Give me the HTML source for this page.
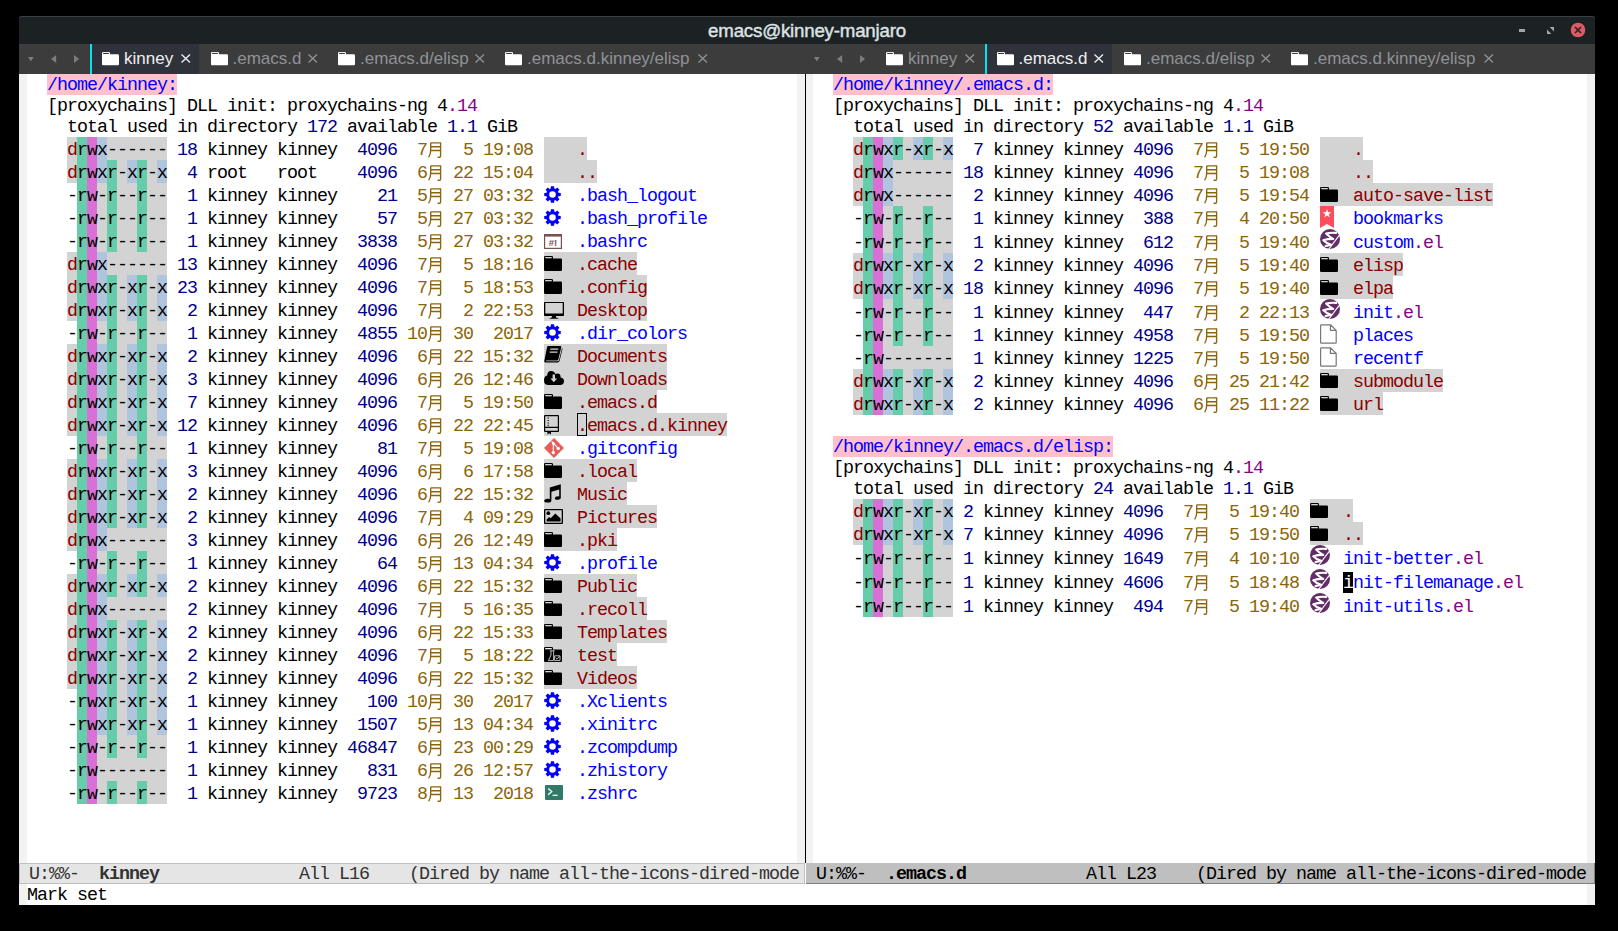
<!DOCTYPE html><html><head><meta charset="utf-8"><style>
html,body{margin:0;padding:0;}body{width:1618px;height:931px;background:#000;position:relative;overflow:hidden;}
.t{position:absolute;white-space:pre;line-height:23px;font-family:'Liberation Mono',monospace;font-size:18.333px;letter-spacing:-1px;}
.r{position:absolute;}
.i{position:absolute;overflow:visible;}
.s{position:absolute;white-space:pre;font-family:"Liberation Sans",sans-serif;}
</style></head><body>
<svg width="0" height="0" style="position:absolute"><defs>
<symbol id="folder" viewBox="0 0 18 15"><path d="M0,1.2Q0,0 1.2,0H7.8Q9,0 9,1.2V2.6H16.8Q18,2.6 18,3.8V13.8Q18,15 16.8,15H1.2Q0,15 0,13.8Z" fill="currentColor"/><rect x="1.2" y="1" width="6.6" height="1.3" fill="var(--ib,#d3d3d3)"/></symbol>
<symbol id="gear" viewBox="0 0 17 17"><path fill-rule="evenodd" fill="#0000ff" d="M6.69,2.57 L6.90,0.25 L10.10,0.25 L10.31,2.57 L11.41,3.03 L13.20,1.54 L15.46,3.80 L13.97,5.59 L14.43,6.69 L16.75,6.90 L16.75,10.10 L14.43,10.31 L13.97,11.41 L15.46,13.20 L13.20,15.46 L11.41,13.97 L10.31,14.43 L10.10,16.75 L6.90,16.75 L6.69,14.43 L5.59,13.97 L3.80,15.46 L1.54,13.20 L3.03,11.41 L2.57,10.31 L0.25,10.10 L0.25,6.90 L2.57,6.69 L3.03,5.59 L1.54,3.80 L3.80,1.54 L5.59,3.03Z M5.20,8.50 a3.3,3.3 0 1,0 6.6,0 a3.3,3.3 0 1,0 -6.6,0Z"/></symbol>
<symbol id="shebang" viewBox="0 0 18 15"><rect x="0.6" y="0.6" width="16.8" height="13.8" fill="#fff" stroke="#7b5050" stroke-width="1.2"/><rect x="0" y="0" width="18" height="2.6" fill="#7b5050"/><text x="9" y="12.3" font-family="Liberation Sans" font-weight="bold" font-size="9.5" fill="#7b5050" text-anchor="middle">#!</text></symbol>
<symbol id="monitor" viewBox="0 0 20 17"><path fill-rule="evenodd" d="M0.8,0H19.2Q20,0 20,0.8V13.2Q20,14 19.2,14H0.8Q0,14 0,13.2V0.8Q0,0 0.8,0ZM1.3,1.1V11.4H18.7V1.1Z"/><path d="M8.3,14H11.7L12.3,15.6L15,16.8H5L7.7,15.6Z"/></symbol>
<symbol id="book" viewBox="0 0 19 17"><path d="M4.2,0H16.5Q17.6,0 17.3,1.2L14.3,13.4Q14,14.4 13,14.4H2.2L1.8,15.3H13.4Q14.6,15.3 15,14.2L18,2.2L18.6,2.4L15.6,14.8Q15.2,16.4 13.6,16.4H1.3Q0,16.4 0.3,15.1L3.1,1.1Q3.3,0 4.2,0Z"/><path d="M6.3,3.2H14.2M5.7,6.2H13.5" stroke="#d3d3d3" stroke-width="1.3"/></symbol>
<symbol id="cloud" viewBox="0 0 20 14"><path d="M4.5,14H16Q20,14 20,10.3Q20,7 16.6,6.6Q16.8,2.8 13.5,2.6Q12.3,2.6 11.6,3.2Q10.2,0 7,0Q3.2,0.2 3.2,4.6Q0,5.4 0,9.4Q0.2,14 4.5,14Z"/><path d="M8.6,3.6H11V7.6H13.2L9.8,11.2L6.4,7.6H8.6Z" fill="#d3d3d3"/></symbol>
<symbol id="book2" viewBox="0 0 15 20"><path fill-rule="evenodd" d="M1,0H14Q15,0 15,1V16Q15,17 14,17H7V19.5L5.2,18.3L3.4,19.5V17H1Q0,17 0,16V1Q0,0 1,0ZM1.2,1.2V11.8H13.8V1.2ZM1.2,13V15.8H13.8V13Z"/><path d="M4.2,2.6V3.6M4.2,5V6M4.2,7.4V8.4M4.2,9.8V10.8" stroke="#000" stroke-width="1.3"/></symbol>
<symbol id="git" viewBox="0 0 20 20"><path d="M10,0.3L19.7,10L10,19.7L0.3,10Z" fill="#e35d5b" stroke="#e35d5b" stroke-width="0.6" stroke-linejoin="round"/><path d="M7.6,3.4L9.3,5.1V14.2M9.3,5.1L14,10.2" stroke="#fff" stroke-width="1.1" fill="none"/><circle cx="9.3" cy="14.6" r="1.7" fill="#fff"/><circle cx="14.2" cy="10.4" r="1.7" fill="#fff"/><circle cx="9.3" cy="5.3" r="1.4" fill="#fff"/></symbol>
<symbol id="music" viewBox="0 0 17 19"><path d="M5.8,3.6L16.8,0.2V13.6Q16.8,15.6 13.8,15.8Q10.8,15.8 10.8,14.2Q11,12.4 14,12.2Q14.6,12.2 15.2,12.4V5.4L7.4,7.8V16.2Q7.4,18.4 4.2,18.6Q0.2,18.6 0.2,17Q0.3,15 3.6,14.8Q4.3,14.8 5.8,15.1Z"/></symbol>
<symbol id="picture" viewBox="0 0 19 15"><path fill-rule="evenodd" d="M1,0H18Q19,0 19,1V14Q19,15 18,15H1Q0,15 0,14V1Q0,0 1,0ZM1.3,1.3V13.7H17.7V1.3Z"/><circle cx="4.3" cy="4.2" r="1.9"/><path d="M2.6,12.4V10.6L5.2,8L6.6,9.2L11.4,4.4L16.6,9.6V12.4Z"/></symbol>
<symbol id="testdir" viewBox="0 0 18 15"><path d="M0,1.2Q0,0 1.2,0H7.8Q9,0 9,1.2V2.6H16.8Q18,2.6 18,3.8V13.8Q18,15 16.8,15H1.2Q0,15 0,13.8Z"/><rect x="1.2" y="1" width="6.6" height="1.3" fill="#eee"/><path d="M5.8,3.8H10.6M7,3.8V8L4.4,13.6H9.6M9.6,3.8V13.6M10.6,8.8H16V13.6H10.6ZM11.6,10.8L13,12.2L15.8,9" stroke="#ccc" stroke-width="0.9" fill="none"/></symbol>
<symbol id="term" viewBox="0 0 18 15"><rect x="0" y="0" width="18" height="15" rx="1" fill="#317a6a"/><path d="M3.2,3.4L6.8,6.6L3.2,9.8" stroke="#fff" stroke-width="1.3" fill="none"/><path d="M7.6,10.3H12.6" stroke="#fff" stroke-width="1.2"/></symbol>
<symbol id="bookmark" viewBox="0 0 14 22"><path d="M0,0H14V22L7,18L0,22Z" fill="#ff4d5d"/><path d="M7,3L8.1,6.2H11.4L8.8,8.2L9.7,11.4L7,9.5L4.3,11.4L5.2,8.2L2.6,6.2H5.9Z" fill="#fff"/></symbol>
<symbol id="emacs" viewBox="0 0 20 20"><circle cx="10" cy="10" r="10" fill="#622d64"/><path d="M16.2,3.9Q10.5,3.4 6.1,4.5Q9,7.6 13.2,9.9Q7.4,9.9 3.3,11.3Q6.4,14.6 11.2,15.8Q8.2,16.5 5.6,17" stroke="#fff" stroke-width="2.1" fill="none" stroke-linejoin="round" stroke-linecap="round"/><path d="M19.8,5.6L8.6,20.4" stroke="#fff" stroke-width="1.1"/></symbol>
<symbol id="file" viewBox="0 0 17 20"><path d="M1.2,0.8H10.4L16.2,6.4V18.4Q16.2,19.2 15.4,19.2H1.2Q0.6,19.2 0.6,18.4V1.6Q0.6,0.8 1.2,0.8ZM10.4,0.8V6.4H16.2" stroke="#777" stroke-width="1.2" fill="none" stroke-linejoin="round"/></symbol>
<symbol id="yue" viewBox="0 0 14 16"><path d="M2.7,0.8V8Q2.7,12.8 0.6,15.4M2.7,0.8H12.6V14Q12.6,15.2 11.4,15.2H9.6M2.7,4.7H12.6M2.7,8.5H12.6" stroke="#8b6508" stroke-width="1.35" fill="none"/></symbol>
<symbol id="tfolder" viewBox="0 0 17 13.5"><path d="M0,1.2Q0,0 1.2,0H6.8Q8,0 8,1.2V2.2H15.8Q17,2.2 17,3.4V12.3Q17,13.5 15.8,13.5H1.2Q0,13.5 0,12.3Z" fill="#fff"/><rect x="1.1" y="0.9" width="5.8" height="1.1" fill="var(--tb,#3c3c3c)"/></symbol>
</defs></svg>
<div class="r" style="left:19px;top:44px;width:1576px;height:861px;background:#fff;"></div>
<div class="r" style="left:19px;top:16px;width:1576px;height:28px;background:#1c2123;border-radius:3px 3px 0 0;box-shadow:inset 0 1px 0 #384144"></div>
<div class="s" style="left:19px;top:20px;width:1576px;text-align:center;font-size:18.7px;letter-spacing:-0.2px;-webkit-text-stroke:0.45px #dce1e4;color:#dce1e4;line-height:21px">emacs@kinney-manjaro</div>
<div class="r" style="left:1519px;top:28.5px;width:6.3px;height:3px;background:#a3a6aa;"></div>
<svg class="i" style="left:1546.5px;top:26.5px" width="7" height="7"><path d="M2.6,0H7V4.4ZM0,2.6V7H4.4Z" fill="#a3a6aa"/></svg>
<svg class="i" style="left:1570px;top:22px" width="16" height="16"><circle cx="8" cy="8" r="7.3" fill="#dc5c66"/><path d="M5,5L11,11M11,5L5,11" stroke="#1e2325" stroke-width="1.7"/></svg>
<div class="r" style="left:19px;top:44px;width:1576px;height:30px;background:#3c3c3c;"></div>
<svg class="i" style="left:28px;top:56.5px" width="7" height="6"><path d="M0,0H5.6L2.8,4.6Z" fill="#7c7c7c"/></svg>
<svg class="i" style="left:51px;top:55px" width="7" height="9"><path d="M5.2,0V8L0,4Z" fill="#7c7c7c"/></svg>
<svg class="i" style="left:74px;top:55px" width="7" height="9"><path d="M0,0V8L5.2,4Z" fill="#7c7c7c"/></svg>
<div class="r" style="left:92px;top:44px;width:107px;height:30px;background:#2f323b;"></div>
<div class="r" style="left:90px;top:44px;width:2px;height:30px;background:#00e5f0;"></div>
<svg class="i" style="left:101.5px;top:52px;--tb:#2f323b" width="17" height="13.5"><use href="#tfolder"/></svg>
<div class="s" style="left:124px;top:49px;font-size:17px;line-height:20px;color:#f0f0f0">kinney</div>
<svg class="i" style="left:180.6px;top:54px" width="10" height="9"><path d="M0.5,0.5L9,8.5M9,0.5L0.5,8.5" stroke="#f0f0f0" stroke-width="1.3"/></svg>
<svg class="i" style="left:210.7px;top:52px;--tb:#3c3c3c" width="17" height="13.5"><use href="#tfolder"/></svg>
<div class="s" style="left:232.5px;top:49px;font-size:17px;line-height:20px;color:#8f9296">.emacs.d</div>
<svg class="i" style="left:307.7px;top:54px" width="10" height="9"><path d="M0.5,0.5L9,8.5M9,0.5L0.5,8.5" stroke="#8f9296" stroke-width="1.3"/></svg>
<svg class="i" style="left:337.7px;top:52px;--tb:#3c3c3c" width="17" height="13.5"><use href="#tfolder"/></svg>
<div class="s" style="left:360px;top:49px;font-size:17px;line-height:20px;color:#8f9296">.emacs.d/elisp</div>
<svg class="i" style="left:475px;top:54px" width="10" height="9"><path d="M0.5,0.5L9,8.5M9,0.5L0.5,8.5" stroke="#8f9296" stroke-width="1.3"/></svg>
<svg class="i" style="left:504.7px;top:52px;--tb:#3c3c3c" width="17" height="13.5"><use href="#tfolder"/></svg>
<div class="s" style="left:527px;top:49px;font-size:17px;line-height:20px;color:#8f9296">.emacs.d.kinney/elisp</div>
<svg class="i" style="left:698px;top:54px" width="10" height="9"><path d="M0.5,0.5L9,8.5M9,0.5L0.5,8.5" stroke="#8f9296" stroke-width="1.3"/></svg>
<svg class="i" style="left:814px;top:56.5px" width="7" height="6"><path d="M0,0H5.6L2.8,4.6Z" fill="#7c7c7c"/></svg>
<svg class="i" style="left:837px;top:55px" width="7" height="9"><path d="M5.2,0V8L0,4Z" fill="#7c7c7c"/></svg>
<svg class="i" style="left:860px;top:55px" width="7" height="9"><path d="M0,0V8L5.2,4Z" fill="#7c7c7c"/></svg>
<svg class="i" style="left:885.7px;top:52px;--tb:#3c3c3c" width="17" height="13.5"><use href="#tfolder"/></svg>
<div class="s" style="left:908px;top:49px;font-size:17px;line-height:20px;color:#8f9296">kinney</div>
<svg class="i" style="left:964.8px;top:54px" width="10" height="9"><path d="M0.5,0.5L9,8.5M9,0.5L0.5,8.5" stroke="#8f9296" stroke-width="1.3"/></svg>
<div class="r" style="left:987px;top:44px;width:125px;height:30px;background:#2f323b;"></div>
<div class="r" style="left:985px;top:44px;width:2px;height:30px;background:#00e5f0;"></div>
<svg class="i" style="left:996.8px;top:52px;--tb:#2f323b" width="17" height="13.5"><use href="#tfolder"/></svg>
<div class="s" style="left:1018.5px;top:49px;font-size:17px;line-height:20px;color:#f0f0f0">.emacs.d</div>
<svg class="i" style="left:1093.7px;top:54px" width="10" height="9"><path d="M0.5,0.5L9,8.5M9,0.5L0.5,8.5" stroke="#f0f0f0" stroke-width="1.3"/></svg>
<svg class="i" style="left:1123.7px;top:52px;--tb:#3c3c3c" width="17" height="13.5"><use href="#tfolder"/></svg>
<div class="s" style="left:1146px;top:49px;font-size:17px;line-height:20px;color:#8f9296">.emacs.d/elisp</div>
<svg class="i" style="left:1261.4px;top:54px" width="10" height="9"><path d="M0.5,0.5L9,8.5M9,0.5L0.5,8.5" stroke="#8f9296" stroke-width="1.3"/></svg>
<svg class="i" style="left:1290.8px;top:52px;--tb:#3c3c3c" width="17" height="13.5"><use href="#tfolder"/></svg>
<div class="s" style="left:1313px;top:49px;font-size:17px;line-height:20px;color:#8f9296">.emacs.d.kinney/elisp</div>
<svg class="i" style="left:1484.3px;top:54px" width="10" height="9"><path d="M0.5,0.5L9,8.5M9,0.5L0.5,8.5" stroke="#8f9296" stroke-width="1.3"/></svg>
<div class="r" style="left:19px;top:74px;width:8px;height:831px;background:#f2f2f2;"></div>
<div class="r" style="left:797px;top:74px;width:8px;height:789px;background:#f2f2f2;"></div>
<div class="r" style="left:805px;top:74px;width:1px;height:789px;background:#000;"></div>
<div class="r" style="left:806px;top:74px;width:7px;height:789px;background:#f2f2f2;"></div>
<div class="r" style="left:1587px;top:74px;width:8px;height:831px;background:#f2f2f2;"></div>
<div class="r" style="left:47px;top:74px;width:130px;height:21px;background:#ffc0cb;"></div>
<div class="t" style="left:47px;top:74px;color:#0000ff;">/home/kinney:</div>
<div class="t" style="left:47px;top:95px;color:#000;">[proxychains] DLL init: proxychains-ng 4</div>
<div class="t" style="left:447px;top:95px;color:#8b008b;">.14</div>
<div class="t" style="left:47px;top:116px;color:#000;">  total used in directory </div>
<div class="t" style="left:307px;top:116px;color:#00008b;">172</div>
<div class="t" style="left:337px;top:116px;color:#000;"> available </div>
<div class="t" style="left:447px;top:116px;color:#00008b;">1.1</div>
<div class="t" style="left:477px;top:116px;color:#000;"> GiB</div>
<div class="r" style="left:67px;top:137px;width:10px;height:23px;background:#d3d3d3;"></div>
<div class="r" style="left:77px;top:137px;width:10px;height:23px;background:#66cdaa;"></div>
<div class="r" style="left:87px;top:137px;width:10px;height:23px;background:#da70d6;"></div>
<div class="r" style="left:97px;top:137px;width:10px;height:23px;background:#b0c4de;"></div>
<div class="r" style="left:107px;top:137px;width:10px;height:23px;background:#d3d3d3;"></div>
<div class="r" style="left:117px;top:137px;width:10px;height:23px;background:#d3d3d3;"></div>
<div class="r" style="left:127px;top:137px;width:10px;height:23px;background:#d3d3d3;"></div>
<div class="r" style="left:137px;top:137px;width:10px;height:23px;background:#d3d3d3;"></div>
<div class="r" style="left:147px;top:137px;width:10px;height:23px;background:#d3d3d3;"></div>
<div class="r" style="left:157px;top:137px;width:10px;height:23px;background:#d3d3d3;"></div>
<div class="t" style="left:67px;top:139px;color:#8b0000;">d</div>
<div class="t" style="left:77px;top:139px;color:#000;">rwx------</div>
<div class="t" style="left:177px;top:139px;color:#00008b;">18</div>
<div class="t" style="left:207px;top:139px;color:#000;">kinney kinney</div>
<div class="t" style="left:357px;top:139px;color:#00008b;">4096</div>
<div class="t" style="left:417px;top:139px;color:#8b6508;">7</div>
<svg class="i" style="left:428px;top:142px" width="14" height="16"><use href="#yue"/></svg>
<div class="t" style="left:463px;top:139px;color:#8b6508;">5</div>
<div class="t" style="left:483px;top:139px;color:#8b6508;">19:08</div>
<div class="r" style="left:544px;top:137px;width:43px;height:23px;background:#d3d3d3;"></div>
<div class="t" style="left:577px;top:139px;color:#8b0000;">.</div>
<div class="r" style="left:67px;top:160px;width:10px;height:23px;background:#d3d3d3;"></div>
<div class="r" style="left:77px;top:160px;width:10px;height:23px;background:#66cdaa;"></div>
<div class="r" style="left:87px;top:160px;width:10px;height:23px;background:#da70d6;"></div>
<div class="r" style="left:97px;top:160px;width:10px;height:23px;background:#b0c4de;"></div>
<div class="r" style="left:107px;top:160px;width:10px;height:23px;background:#66cdaa;"></div>
<div class="r" style="left:117px;top:160px;width:10px;height:23px;background:#d3d3d3;"></div>
<div class="r" style="left:127px;top:160px;width:10px;height:23px;background:#b0c4de;"></div>
<div class="r" style="left:137px;top:160px;width:10px;height:23px;background:#66cdaa;"></div>
<div class="r" style="left:147px;top:160px;width:10px;height:23px;background:#d3d3d3;"></div>
<div class="r" style="left:157px;top:160px;width:10px;height:23px;background:#b0c4de;"></div>
<div class="t" style="left:67px;top:162px;color:#8b0000;">d</div>
<div class="t" style="left:77px;top:162px;color:#000;">rwxr-xr-x</div>
<div class="t" style="left:187px;top:162px;color:#00008b;">4</div>
<div class="t" style="left:207px;top:162px;color:#000;">root   root</div>
<div class="t" style="left:357px;top:162px;color:#00008b;">4096</div>
<div class="t" style="left:417px;top:162px;color:#8b6508;">6</div>
<svg class="i" style="left:428px;top:165px" width="14" height="16"><use href="#yue"/></svg>
<div class="t" style="left:453px;top:162px;color:#8b6508;">22</div>
<div class="t" style="left:483px;top:162px;color:#8b6508;">15:04</div>
<div class="r" style="left:544px;top:160px;width:53px;height:23px;background:#d3d3d3;"></div>
<div class="t" style="left:577px;top:162px;color:#8b0000;">..</div>
<div class="r" style="left:77px;top:183px;width:10px;height:23px;background:#66cdaa;"></div>
<div class="r" style="left:87px;top:183px;width:10px;height:23px;background:#da70d6;"></div>
<div class="r" style="left:97px;top:183px;width:10px;height:23px;background:#d3d3d3;"></div>
<div class="r" style="left:107px;top:183px;width:10px;height:23px;background:#66cdaa;"></div>
<div class="r" style="left:117px;top:183px;width:10px;height:23px;background:#d3d3d3;"></div>
<div class="r" style="left:127px;top:183px;width:10px;height:23px;background:#d3d3d3;"></div>
<div class="r" style="left:137px;top:183px;width:10px;height:23px;background:#66cdaa;"></div>
<div class="r" style="left:147px;top:183px;width:10px;height:23px;background:#d3d3d3;"></div>
<div class="r" style="left:157px;top:183px;width:10px;height:23px;background:#d3d3d3;"></div>
<div class="t" style="left:67px;top:185px;color:#000;">-</div>
<div class="t" style="left:77px;top:185px;color:#000;">rw-r--r--</div>
<div class="t" style="left:187px;top:185px;color:#00008b;">1</div>
<div class="t" style="left:207px;top:185px;color:#000;">kinney kinney</div>
<div class="t" style="left:377px;top:185px;color:#00008b;">21</div>
<div class="t" style="left:417px;top:185px;color:#8b6508;">5</div>
<svg class="i" style="left:428px;top:188px" width="14" height="16"><use href="#yue"/></svg>
<div class="t" style="left:453px;top:185px;color:#8b6508;">27</div>
<div class="t" style="left:483px;top:185px;color:#8b6508;">03:32</div>
<svg class="i" style="left:544px;top:186px" width="17" height="17"><use href="#gear"/></svg>
<div class="t" style="left:577px;top:185px;color:#0000ff;">.bash_logout</div>
<div class="r" style="left:77px;top:206px;width:10px;height:23px;background:#66cdaa;"></div>
<div class="r" style="left:87px;top:206px;width:10px;height:23px;background:#da70d6;"></div>
<div class="r" style="left:97px;top:206px;width:10px;height:23px;background:#d3d3d3;"></div>
<div class="r" style="left:107px;top:206px;width:10px;height:23px;background:#66cdaa;"></div>
<div class="r" style="left:117px;top:206px;width:10px;height:23px;background:#d3d3d3;"></div>
<div class="r" style="left:127px;top:206px;width:10px;height:23px;background:#d3d3d3;"></div>
<div class="r" style="left:137px;top:206px;width:10px;height:23px;background:#66cdaa;"></div>
<div class="r" style="left:147px;top:206px;width:10px;height:23px;background:#d3d3d3;"></div>
<div class="r" style="left:157px;top:206px;width:10px;height:23px;background:#d3d3d3;"></div>
<div class="t" style="left:67px;top:208px;color:#000;">-</div>
<div class="t" style="left:77px;top:208px;color:#000;">rw-r--r--</div>
<div class="t" style="left:187px;top:208px;color:#00008b;">1</div>
<div class="t" style="left:207px;top:208px;color:#000;">kinney kinney</div>
<div class="t" style="left:377px;top:208px;color:#00008b;">57</div>
<div class="t" style="left:417px;top:208px;color:#8b6508;">5</div>
<svg class="i" style="left:428px;top:211px" width="14" height="16"><use href="#yue"/></svg>
<div class="t" style="left:453px;top:208px;color:#8b6508;">27</div>
<div class="t" style="left:483px;top:208px;color:#8b6508;">03:32</div>
<svg class="i" style="left:544px;top:209px" width="17" height="17"><use href="#gear"/></svg>
<div class="t" style="left:577px;top:208px;color:#0000ff;">.bash_profile</div>
<div class="r" style="left:77px;top:229px;width:10px;height:23px;background:#66cdaa;"></div>
<div class="r" style="left:87px;top:229px;width:10px;height:23px;background:#da70d6;"></div>
<div class="r" style="left:97px;top:229px;width:10px;height:23px;background:#d3d3d3;"></div>
<div class="r" style="left:107px;top:229px;width:10px;height:23px;background:#66cdaa;"></div>
<div class="r" style="left:117px;top:229px;width:10px;height:23px;background:#d3d3d3;"></div>
<div class="r" style="left:127px;top:229px;width:10px;height:23px;background:#d3d3d3;"></div>
<div class="r" style="left:137px;top:229px;width:10px;height:23px;background:#66cdaa;"></div>
<div class="r" style="left:147px;top:229px;width:10px;height:23px;background:#d3d3d3;"></div>
<div class="r" style="left:157px;top:229px;width:10px;height:23px;background:#d3d3d3;"></div>
<div class="t" style="left:67px;top:231px;color:#000;">-</div>
<div class="t" style="left:77px;top:231px;color:#000;">rw-r--r--</div>
<div class="t" style="left:187px;top:231px;color:#00008b;">1</div>
<div class="t" style="left:207px;top:231px;color:#000;">kinney kinney</div>
<div class="t" style="left:357px;top:231px;color:#00008b;">3838</div>
<div class="t" style="left:417px;top:231px;color:#8b6508;">5</div>
<svg class="i" style="left:428px;top:234px" width="14" height="16"><use href="#yue"/></svg>
<div class="t" style="left:453px;top:231px;color:#8b6508;">27</div>
<div class="t" style="left:483px;top:231px;color:#8b6508;">03:32</div>
<svg class="i" style="left:544px;top:234px" width="18" height="15"><use href="#shebang"/></svg>
<div class="t" style="left:577px;top:231px;color:#0000ff;">.bashrc</div>
<div class="r" style="left:67px;top:252px;width:10px;height:23px;background:#d3d3d3;"></div>
<div class="r" style="left:77px;top:252px;width:10px;height:23px;background:#66cdaa;"></div>
<div class="r" style="left:87px;top:252px;width:10px;height:23px;background:#da70d6;"></div>
<div class="r" style="left:97px;top:252px;width:10px;height:23px;background:#b0c4de;"></div>
<div class="r" style="left:107px;top:252px;width:10px;height:23px;background:#d3d3d3;"></div>
<div class="r" style="left:117px;top:252px;width:10px;height:23px;background:#d3d3d3;"></div>
<div class="r" style="left:127px;top:252px;width:10px;height:23px;background:#d3d3d3;"></div>
<div class="r" style="left:137px;top:252px;width:10px;height:23px;background:#d3d3d3;"></div>
<div class="r" style="left:147px;top:252px;width:10px;height:23px;background:#d3d3d3;"></div>
<div class="r" style="left:157px;top:252px;width:10px;height:23px;background:#d3d3d3;"></div>
<div class="t" style="left:67px;top:254px;color:#8b0000;">d</div>
<div class="t" style="left:77px;top:254px;color:#000;">rwx------</div>
<div class="t" style="left:177px;top:254px;color:#00008b;">13</div>
<div class="t" style="left:207px;top:254px;color:#000;">kinney kinney</div>
<div class="t" style="left:357px;top:254px;color:#00008b;">4096</div>
<div class="t" style="left:417px;top:254px;color:#8b6508;">7</div>
<svg class="i" style="left:428px;top:257px" width="14" height="16"><use href="#yue"/></svg>
<div class="t" style="left:463px;top:254px;color:#8b6508;">5</div>
<div class="t" style="left:483px;top:254px;color:#8b6508;">18:16</div>
<div class="r" style="left:544px;top:252px;width:93px;height:23px;background:#d3d3d3;"></div>
<svg class="i" style="left:544px;top:256px" width="18" height="15"><use href="#folder"/></svg>
<div class="t" style="left:577px;top:254px;color:#8b0000;">.cache</div>
<div class="r" style="left:67px;top:275px;width:10px;height:23px;background:#d3d3d3;"></div>
<div class="r" style="left:77px;top:275px;width:10px;height:23px;background:#66cdaa;"></div>
<div class="r" style="left:87px;top:275px;width:10px;height:23px;background:#da70d6;"></div>
<div class="r" style="left:97px;top:275px;width:10px;height:23px;background:#b0c4de;"></div>
<div class="r" style="left:107px;top:275px;width:10px;height:23px;background:#66cdaa;"></div>
<div class="r" style="left:117px;top:275px;width:10px;height:23px;background:#d3d3d3;"></div>
<div class="r" style="left:127px;top:275px;width:10px;height:23px;background:#b0c4de;"></div>
<div class="r" style="left:137px;top:275px;width:10px;height:23px;background:#66cdaa;"></div>
<div class="r" style="left:147px;top:275px;width:10px;height:23px;background:#d3d3d3;"></div>
<div class="r" style="left:157px;top:275px;width:10px;height:23px;background:#b0c4de;"></div>
<div class="t" style="left:67px;top:277px;color:#8b0000;">d</div>
<div class="t" style="left:77px;top:277px;color:#000;">rwxr-xr-x</div>
<div class="t" style="left:177px;top:277px;color:#00008b;">23</div>
<div class="t" style="left:207px;top:277px;color:#000;">kinney kinney</div>
<div class="t" style="left:357px;top:277px;color:#00008b;">4096</div>
<div class="t" style="left:417px;top:277px;color:#8b6508;">7</div>
<svg class="i" style="left:428px;top:280px" width="14" height="16"><use href="#yue"/></svg>
<div class="t" style="left:463px;top:277px;color:#8b6508;">5</div>
<div class="t" style="left:483px;top:277px;color:#8b6508;">18:53</div>
<div class="r" style="left:544px;top:275px;width:103px;height:23px;background:#d3d3d3;"></div>
<svg class="i" style="left:544px;top:279px" width="18" height="15"><use href="#folder"/></svg>
<div class="t" style="left:577px;top:277px;color:#8b0000;">.config</div>
<div class="r" style="left:67px;top:298px;width:10px;height:23px;background:#d3d3d3;"></div>
<div class="r" style="left:77px;top:298px;width:10px;height:23px;background:#66cdaa;"></div>
<div class="r" style="left:87px;top:298px;width:10px;height:23px;background:#da70d6;"></div>
<div class="r" style="left:97px;top:298px;width:10px;height:23px;background:#b0c4de;"></div>
<div class="r" style="left:107px;top:298px;width:10px;height:23px;background:#66cdaa;"></div>
<div class="r" style="left:117px;top:298px;width:10px;height:23px;background:#d3d3d3;"></div>
<div class="r" style="left:127px;top:298px;width:10px;height:23px;background:#b0c4de;"></div>
<div class="r" style="left:137px;top:298px;width:10px;height:23px;background:#66cdaa;"></div>
<div class="r" style="left:147px;top:298px;width:10px;height:23px;background:#d3d3d3;"></div>
<div class="r" style="left:157px;top:298px;width:10px;height:23px;background:#b0c4de;"></div>
<div class="t" style="left:67px;top:300px;color:#8b0000;">d</div>
<div class="t" style="left:77px;top:300px;color:#000;">rwxr-xr-x</div>
<div class="t" style="left:187px;top:300px;color:#00008b;">2</div>
<div class="t" style="left:207px;top:300px;color:#000;">kinney kinney</div>
<div class="t" style="left:357px;top:300px;color:#00008b;">4096</div>
<div class="t" style="left:417px;top:300px;color:#8b6508;">7</div>
<svg class="i" style="left:428px;top:303px" width="14" height="16"><use href="#yue"/></svg>
<div class="t" style="left:463px;top:300px;color:#8b6508;">2</div>
<div class="t" style="left:483px;top:300px;color:#8b6508;">22:53</div>
<div class="r" style="left:544px;top:298px;width:103px;height:23px;background:#d3d3d3;"></div>
<svg class="i" style="left:544px;top:302px" width="20" height="17"><use href="#monitor"/></svg>
<div class="t" style="left:577px;top:300px;color:#8b0000;">Desktop</div>
<div class="r" style="left:77px;top:321px;width:10px;height:23px;background:#66cdaa;"></div>
<div class="r" style="left:87px;top:321px;width:10px;height:23px;background:#da70d6;"></div>
<div class="r" style="left:97px;top:321px;width:10px;height:23px;background:#d3d3d3;"></div>
<div class="r" style="left:107px;top:321px;width:10px;height:23px;background:#66cdaa;"></div>
<div class="r" style="left:117px;top:321px;width:10px;height:23px;background:#d3d3d3;"></div>
<div class="r" style="left:127px;top:321px;width:10px;height:23px;background:#d3d3d3;"></div>
<div class="r" style="left:137px;top:321px;width:10px;height:23px;background:#66cdaa;"></div>
<div class="r" style="left:147px;top:321px;width:10px;height:23px;background:#d3d3d3;"></div>
<div class="r" style="left:157px;top:321px;width:10px;height:23px;background:#d3d3d3;"></div>
<div class="t" style="left:67px;top:323px;color:#000;">-</div>
<div class="t" style="left:77px;top:323px;color:#000;">rw-r--r--</div>
<div class="t" style="left:187px;top:323px;color:#00008b;">1</div>
<div class="t" style="left:207px;top:323px;color:#000;">kinney kinney</div>
<div class="t" style="left:357px;top:323px;color:#00008b;">4855</div>
<div class="t" style="left:407px;top:323px;color:#8b6508;">10</div>
<svg class="i" style="left:428px;top:326px" width="14" height="16"><use href="#yue"/></svg>
<div class="t" style="left:453px;top:323px;color:#8b6508;">30</div>
<div class="t" style="left:493px;top:323px;color:#8b6508;">2017</div>
<svg class="i" style="left:544px;top:324px" width="17" height="17"><use href="#gear"/></svg>
<div class="t" style="left:577px;top:323px;color:#0000ff;">.dir_colors</div>
<div class="r" style="left:67px;top:344px;width:10px;height:23px;background:#d3d3d3;"></div>
<div class="r" style="left:77px;top:344px;width:10px;height:23px;background:#66cdaa;"></div>
<div class="r" style="left:87px;top:344px;width:10px;height:23px;background:#da70d6;"></div>
<div class="r" style="left:97px;top:344px;width:10px;height:23px;background:#b0c4de;"></div>
<div class="r" style="left:107px;top:344px;width:10px;height:23px;background:#66cdaa;"></div>
<div class="r" style="left:117px;top:344px;width:10px;height:23px;background:#d3d3d3;"></div>
<div class="r" style="left:127px;top:344px;width:10px;height:23px;background:#b0c4de;"></div>
<div class="r" style="left:137px;top:344px;width:10px;height:23px;background:#66cdaa;"></div>
<div class="r" style="left:147px;top:344px;width:10px;height:23px;background:#d3d3d3;"></div>
<div class="r" style="left:157px;top:344px;width:10px;height:23px;background:#b0c4de;"></div>
<div class="t" style="left:67px;top:346px;color:#8b0000;">d</div>
<div class="t" style="left:77px;top:346px;color:#000;">rwxr-xr-x</div>
<div class="t" style="left:187px;top:346px;color:#00008b;">2</div>
<div class="t" style="left:207px;top:346px;color:#000;">kinney kinney</div>
<div class="t" style="left:357px;top:346px;color:#00008b;">4096</div>
<div class="t" style="left:417px;top:346px;color:#8b6508;">6</div>
<svg class="i" style="left:428px;top:349px" width="14" height="16"><use href="#yue"/></svg>
<div class="t" style="left:453px;top:346px;color:#8b6508;">22</div>
<div class="t" style="left:483px;top:346px;color:#8b6508;">15:32</div>
<div class="r" style="left:544px;top:344px;width:123px;height:23px;background:#d3d3d3;"></div>
<svg class="i" style="left:544px;top:346px" width="19" height="17"><use href="#book"/></svg>
<div class="t" style="left:577px;top:346px;color:#8b0000;">Documents</div>
<div class="r" style="left:67px;top:367px;width:10px;height:23px;background:#d3d3d3;"></div>
<div class="r" style="left:77px;top:367px;width:10px;height:23px;background:#66cdaa;"></div>
<div class="r" style="left:87px;top:367px;width:10px;height:23px;background:#da70d6;"></div>
<div class="r" style="left:97px;top:367px;width:10px;height:23px;background:#b0c4de;"></div>
<div class="r" style="left:107px;top:367px;width:10px;height:23px;background:#66cdaa;"></div>
<div class="r" style="left:117px;top:367px;width:10px;height:23px;background:#d3d3d3;"></div>
<div class="r" style="left:127px;top:367px;width:10px;height:23px;background:#b0c4de;"></div>
<div class="r" style="left:137px;top:367px;width:10px;height:23px;background:#66cdaa;"></div>
<div class="r" style="left:147px;top:367px;width:10px;height:23px;background:#d3d3d3;"></div>
<div class="r" style="left:157px;top:367px;width:10px;height:23px;background:#b0c4de;"></div>
<div class="t" style="left:67px;top:369px;color:#8b0000;">d</div>
<div class="t" style="left:77px;top:369px;color:#000;">rwxr-xr-x</div>
<div class="t" style="left:187px;top:369px;color:#00008b;">3</div>
<div class="t" style="left:207px;top:369px;color:#000;">kinney kinney</div>
<div class="t" style="left:357px;top:369px;color:#00008b;">4096</div>
<div class="t" style="left:417px;top:369px;color:#8b6508;">6</div>
<svg class="i" style="left:428px;top:372px" width="14" height="16"><use href="#yue"/></svg>
<div class="t" style="left:453px;top:369px;color:#8b6508;">26</div>
<div class="t" style="left:483px;top:369px;color:#8b6508;">12:46</div>
<div class="r" style="left:544px;top:367px;width:123px;height:23px;background:#d3d3d3;"></div>
<svg class="i" style="left:544px;top:371px" width="20" height="14"><use href="#cloud"/></svg>
<div class="t" style="left:577px;top:369px;color:#8b0000;">Downloads</div>
<div class="r" style="left:67px;top:390px;width:10px;height:23px;background:#d3d3d3;"></div>
<div class="r" style="left:77px;top:390px;width:10px;height:23px;background:#66cdaa;"></div>
<div class="r" style="left:87px;top:390px;width:10px;height:23px;background:#da70d6;"></div>
<div class="r" style="left:97px;top:390px;width:10px;height:23px;background:#b0c4de;"></div>
<div class="r" style="left:107px;top:390px;width:10px;height:23px;background:#66cdaa;"></div>
<div class="r" style="left:117px;top:390px;width:10px;height:23px;background:#d3d3d3;"></div>
<div class="r" style="left:127px;top:390px;width:10px;height:23px;background:#b0c4de;"></div>
<div class="r" style="left:137px;top:390px;width:10px;height:23px;background:#66cdaa;"></div>
<div class="r" style="left:147px;top:390px;width:10px;height:23px;background:#d3d3d3;"></div>
<div class="r" style="left:157px;top:390px;width:10px;height:23px;background:#b0c4de;"></div>
<div class="t" style="left:67px;top:392px;color:#8b0000;">d</div>
<div class="t" style="left:77px;top:392px;color:#000;">rwxr-xr-x</div>
<div class="t" style="left:187px;top:392px;color:#00008b;">7</div>
<div class="t" style="left:207px;top:392px;color:#000;">kinney kinney</div>
<div class="t" style="left:357px;top:392px;color:#00008b;">4096</div>
<div class="t" style="left:417px;top:392px;color:#8b6508;">7</div>
<svg class="i" style="left:428px;top:395px" width="14" height="16"><use href="#yue"/></svg>
<div class="t" style="left:463px;top:392px;color:#8b6508;">5</div>
<div class="t" style="left:483px;top:392px;color:#8b6508;">19:50</div>
<div class="r" style="left:544px;top:390px;width:113px;height:23px;background:#d3d3d3;"></div>
<svg class="i" style="left:544px;top:394px" width="18" height="15"><use href="#folder"/></svg>
<div class="t" style="left:577px;top:392px;color:#8b0000;">.emacs.d</div>
<div class="r" style="left:67px;top:413px;width:10px;height:23px;background:#d3d3d3;"></div>
<div class="r" style="left:77px;top:413px;width:10px;height:23px;background:#66cdaa;"></div>
<div class="r" style="left:87px;top:413px;width:10px;height:23px;background:#da70d6;"></div>
<div class="r" style="left:97px;top:413px;width:10px;height:23px;background:#b0c4de;"></div>
<div class="r" style="left:107px;top:413px;width:10px;height:23px;background:#66cdaa;"></div>
<div class="r" style="left:117px;top:413px;width:10px;height:23px;background:#d3d3d3;"></div>
<div class="r" style="left:127px;top:413px;width:10px;height:23px;background:#b0c4de;"></div>
<div class="r" style="left:137px;top:413px;width:10px;height:23px;background:#66cdaa;"></div>
<div class="r" style="left:147px;top:413px;width:10px;height:23px;background:#d3d3d3;"></div>
<div class="r" style="left:157px;top:413px;width:10px;height:23px;background:#b0c4de;"></div>
<div class="t" style="left:67px;top:415px;color:#8b0000;">d</div>
<div class="t" style="left:77px;top:415px;color:#000;">rwxr-xr-x</div>
<div class="t" style="left:177px;top:415px;color:#00008b;">12</div>
<div class="t" style="left:207px;top:415px;color:#000;">kinney kinney</div>
<div class="t" style="left:357px;top:415px;color:#00008b;">4096</div>
<div class="t" style="left:417px;top:415px;color:#8b6508;">6</div>
<svg class="i" style="left:428px;top:418px" width="14" height="16"><use href="#yue"/></svg>
<div class="t" style="left:453px;top:415px;color:#8b6508;">22</div>
<div class="t" style="left:483px;top:415px;color:#8b6508;">22:45</div>
<div class="r" style="left:544px;top:413px;width:183px;height:23px;background:#d3d3d3;"></div>
<svg class="i" style="left:544px;top:415px" width="15" height="20"><use href="#book2"/></svg>
<div class="r" style="left:577px;top:413px;width:8px;height:21px;border:1px solid #000"></div>
<div class="t" style="left:577px;top:415px;color:#8b0000;">.emacs.d.kinney</div>
<div class="r" style="left:77px;top:436px;width:10px;height:23px;background:#66cdaa;"></div>
<div class="r" style="left:87px;top:436px;width:10px;height:23px;background:#da70d6;"></div>
<div class="r" style="left:97px;top:436px;width:10px;height:23px;background:#d3d3d3;"></div>
<div class="r" style="left:107px;top:436px;width:10px;height:23px;background:#66cdaa;"></div>
<div class="r" style="left:117px;top:436px;width:10px;height:23px;background:#d3d3d3;"></div>
<div class="r" style="left:127px;top:436px;width:10px;height:23px;background:#d3d3d3;"></div>
<div class="r" style="left:137px;top:436px;width:10px;height:23px;background:#66cdaa;"></div>
<div class="r" style="left:147px;top:436px;width:10px;height:23px;background:#d3d3d3;"></div>
<div class="r" style="left:157px;top:436px;width:10px;height:23px;background:#d3d3d3;"></div>
<div class="t" style="left:67px;top:438px;color:#000;">-</div>
<div class="t" style="left:77px;top:438px;color:#000;">rw-r--r--</div>
<div class="t" style="left:187px;top:438px;color:#00008b;">1</div>
<div class="t" style="left:207px;top:438px;color:#000;">kinney kinney</div>
<div class="t" style="left:377px;top:438px;color:#00008b;">81</div>
<div class="t" style="left:417px;top:438px;color:#8b6508;">7</div>
<svg class="i" style="left:428px;top:441px" width="14" height="16"><use href="#yue"/></svg>
<div class="t" style="left:463px;top:438px;color:#8b6508;">5</div>
<div class="t" style="left:483px;top:438px;color:#8b6508;">19:08</div>
<svg class="i" style="left:544px;top:438px" width="20" height="20"><use href="#git"/></svg>
<div class="t" style="left:577px;top:438px;color:#0000ff;">.gitconfig</div>
<div class="r" style="left:67px;top:459px;width:10px;height:23px;background:#d3d3d3;"></div>
<div class="r" style="left:77px;top:459px;width:10px;height:23px;background:#66cdaa;"></div>
<div class="r" style="left:87px;top:459px;width:10px;height:23px;background:#da70d6;"></div>
<div class="r" style="left:97px;top:459px;width:10px;height:23px;background:#b0c4de;"></div>
<div class="r" style="left:107px;top:459px;width:10px;height:23px;background:#66cdaa;"></div>
<div class="r" style="left:117px;top:459px;width:10px;height:23px;background:#d3d3d3;"></div>
<div class="r" style="left:127px;top:459px;width:10px;height:23px;background:#b0c4de;"></div>
<div class="r" style="left:137px;top:459px;width:10px;height:23px;background:#66cdaa;"></div>
<div class="r" style="left:147px;top:459px;width:10px;height:23px;background:#d3d3d3;"></div>
<div class="r" style="left:157px;top:459px;width:10px;height:23px;background:#b0c4de;"></div>
<div class="t" style="left:67px;top:461px;color:#8b0000;">d</div>
<div class="t" style="left:77px;top:461px;color:#000;">rwxr-xr-x</div>
<div class="t" style="left:187px;top:461px;color:#00008b;">3</div>
<div class="t" style="left:207px;top:461px;color:#000;">kinney kinney</div>
<div class="t" style="left:357px;top:461px;color:#00008b;">4096</div>
<div class="t" style="left:417px;top:461px;color:#8b6508;">6</div>
<svg class="i" style="left:428px;top:464px" width="14" height="16"><use href="#yue"/></svg>
<div class="t" style="left:463px;top:461px;color:#8b6508;">6</div>
<div class="t" style="left:483px;top:461px;color:#8b6508;">17:58</div>
<div class="r" style="left:544px;top:459px;width:93px;height:23px;background:#d3d3d3;"></div>
<svg class="i" style="left:544px;top:463px" width="18" height="15"><use href="#folder"/></svg>
<div class="t" style="left:577px;top:461px;color:#8b0000;">.local</div>
<div class="r" style="left:67px;top:482px;width:10px;height:23px;background:#d3d3d3;"></div>
<div class="r" style="left:77px;top:482px;width:10px;height:23px;background:#66cdaa;"></div>
<div class="r" style="left:87px;top:482px;width:10px;height:23px;background:#da70d6;"></div>
<div class="r" style="left:97px;top:482px;width:10px;height:23px;background:#b0c4de;"></div>
<div class="r" style="left:107px;top:482px;width:10px;height:23px;background:#66cdaa;"></div>
<div class="r" style="left:117px;top:482px;width:10px;height:23px;background:#d3d3d3;"></div>
<div class="r" style="left:127px;top:482px;width:10px;height:23px;background:#b0c4de;"></div>
<div class="r" style="left:137px;top:482px;width:10px;height:23px;background:#66cdaa;"></div>
<div class="r" style="left:147px;top:482px;width:10px;height:23px;background:#d3d3d3;"></div>
<div class="r" style="left:157px;top:482px;width:10px;height:23px;background:#b0c4de;"></div>
<div class="t" style="left:67px;top:484px;color:#8b0000;">d</div>
<div class="t" style="left:77px;top:484px;color:#000;">rwxr-xr-x</div>
<div class="t" style="left:187px;top:484px;color:#00008b;">2</div>
<div class="t" style="left:207px;top:484px;color:#000;">kinney kinney</div>
<div class="t" style="left:357px;top:484px;color:#00008b;">4096</div>
<div class="t" style="left:417px;top:484px;color:#8b6508;">6</div>
<svg class="i" style="left:428px;top:487px" width="14" height="16"><use href="#yue"/></svg>
<div class="t" style="left:453px;top:484px;color:#8b6508;">22</div>
<div class="t" style="left:483px;top:484px;color:#8b6508;">15:32</div>
<div class="r" style="left:544px;top:482px;width:83px;height:23px;background:#d3d3d3;"></div>
<svg class="i" style="left:544px;top:484px" width="17" height="19"><use href="#music"/></svg>
<div class="t" style="left:577px;top:484px;color:#8b0000;">Music</div>
<div class="r" style="left:67px;top:505px;width:10px;height:23px;background:#d3d3d3;"></div>
<div class="r" style="left:77px;top:505px;width:10px;height:23px;background:#66cdaa;"></div>
<div class="r" style="left:87px;top:505px;width:10px;height:23px;background:#da70d6;"></div>
<div class="r" style="left:97px;top:505px;width:10px;height:23px;background:#b0c4de;"></div>
<div class="r" style="left:107px;top:505px;width:10px;height:23px;background:#66cdaa;"></div>
<div class="r" style="left:117px;top:505px;width:10px;height:23px;background:#d3d3d3;"></div>
<div class="r" style="left:127px;top:505px;width:10px;height:23px;background:#b0c4de;"></div>
<div class="r" style="left:137px;top:505px;width:10px;height:23px;background:#66cdaa;"></div>
<div class="r" style="left:147px;top:505px;width:10px;height:23px;background:#d3d3d3;"></div>
<div class="r" style="left:157px;top:505px;width:10px;height:23px;background:#b0c4de;"></div>
<div class="t" style="left:67px;top:507px;color:#8b0000;">d</div>
<div class="t" style="left:77px;top:507px;color:#000;">rwxr-xr-x</div>
<div class="t" style="left:187px;top:507px;color:#00008b;">2</div>
<div class="t" style="left:207px;top:507px;color:#000;">kinney kinney</div>
<div class="t" style="left:357px;top:507px;color:#00008b;">4096</div>
<div class="t" style="left:417px;top:507px;color:#8b6508;">7</div>
<svg class="i" style="left:428px;top:510px" width="14" height="16"><use href="#yue"/></svg>
<div class="t" style="left:463px;top:507px;color:#8b6508;">4</div>
<div class="t" style="left:483px;top:507px;color:#8b6508;">09:29</div>
<div class="r" style="left:544px;top:505px;width:113px;height:23px;background:#d3d3d3;"></div>
<svg class="i" style="left:544px;top:509px" width="19" height="15"><use href="#picture"/></svg>
<div class="t" style="left:577px;top:507px;color:#8b0000;">Pictures</div>
<div class="r" style="left:67px;top:528px;width:10px;height:23px;background:#d3d3d3;"></div>
<div class="r" style="left:77px;top:528px;width:10px;height:23px;background:#66cdaa;"></div>
<div class="r" style="left:87px;top:528px;width:10px;height:23px;background:#da70d6;"></div>
<div class="r" style="left:97px;top:528px;width:10px;height:23px;background:#b0c4de;"></div>
<div class="r" style="left:107px;top:528px;width:10px;height:23px;background:#d3d3d3;"></div>
<div class="r" style="left:117px;top:528px;width:10px;height:23px;background:#d3d3d3;"></div>
<div class="r" style="left:127px;top:528px;width:10px;height:23px;background:#d3d3d3;"></div>
<div class="r" style="left:137px;top:528px;width:10px;height:23px;background:#d3d3d3;"></div>
<div class="r" style="left:147px;top:528px;width:10px;height:23px;background:#d3d3d3;"></div>
<div class="r" style="left:157px;top:528px;width:10px;height:23px;background:#d3d3d3;"></div>
<div class="t" style="left:67px;top:530px;color:#8b0000;">d</div>
<div class="t" style="left:77px;top:530px;color:#000;">rwx------</div>
<div class="t" style="left:187px;top:530px;color:#00008b;">3</div>
<div class="t" style="left:207px;top:530px;color:#000;">kinney kinney</div>
<div class="t" style="left:357px;top:530px;color:#00008b;">4096</div>
<div class="t" style="left:417px;top:530px;color:#8b6508;">6</div>
<svg class="i" style="left:428px;top:533px" width="14" height="16"><use href="#yue"/></svg>
<div class="t" style="left:453px;top:530px;color:#8b6508;">26</div>
<div class="t" style="left:483px;top:530px;color:#8b6508;">12:49</div>
<div class="r" style="left:544px;top:528px;width:73px;height:23px;background:#d3d3d3;"></div>
<svg class="i" style="left:544px;top:532px" width="18" height="15"><use href="#folder"/></svg>
<div class="t" style="left:577px;top:530px;color:#8b0000;">.pki</div>
<div class="r" style="left:77px;top:551px;width:10px;height:23px;background:#66cdaa;"></div>
<div class="r" style="left:87px;top:551px;width:10px;height:23px;background:#da70d6;"></div>
<div class="r" style="left:97px;top:551px;width:10px;height:23px;background:#d3d3d3;"></div>
<div class="r" style="left:107px;top:551px;width:10px;height:23px;background:#66cdaa;"></div>
<div class="r" style="left:117px;top:551px;width:10px;height:23px;background:#d3d3d3;"></div>
<div class="r" style="left:127px;top:551px;width:10px;height:23px;background:#d3d3d3;"></div>
<div class="r" style="left:137px;top:551px;width:10px;height:23px;background:#66cdaa;"></div>
<div class="r" style="left:147px;top:551px;width:10px;height:23px;background:#d3d3d3;"></div>
<div class="r" style="left:157px;top:551px;width:10px;height:23px;background:#d3d3d3;"></div>
<div class="t" style="left:67px;top:553px;color:#000;">-</div>
<div class="t" style="left:77px;top:553px;color:#000;">rw-r--r--</div>
<div class="t" style="left:187px;top:553px;color:#00008b;">1</div>
<div class="t" style="left:207px;top:553px;color:#000;">kinney kinney</div>
<div class="t" style="left:377px;top:553px;color:#00008b;">64</div>
<div class="t" style="left:417px;top:553px;color:#8b6508;">5</div>
<svg class="i" style="left:428px;top:556px" width="14" height="16"><use href="#yue"/></svg>
<div class="t" style="left:453px;top:553px;color:#8b6508;">13</div>
<div class="t" style="left:483px;top:553px;color:#8b6508;">04:34</div>
<svg class="i" style="left:544px;top:554px" width="17" height="17"><use href="#gear"/></svg>
<div class="t" style="left:577px;top:553px;color:#0000ff;">.profile</div>
<div class="r" style="left:67px;top:574px;width:10px;height:23px;background:#d3d3d3;"></div>
<div class="r" style="left:77px;top:574px;width:10px;height:23px;background:#66cdaa;"></div>
<div class="r" style="left:87px;top:574px;width:10px;height:23px;background:#da70d6;"></div>
<div class="r" style="left:97px;top:574px;width:10px;height:23px;background:#b0c4de;"></div>
<div class="r" style="left:107px;top:574px;width:10px;height:23px;background:#66cdaa;"></div>
<div class="r" style="left:117px;top:574px;width:10px;height:23px;background:#d3d3d3;"></div>
<div class="r" style="left:127px;top:574px;width:10px;height:23px;background:#b0c4de;"></div>
<div class="r" style="left:137px;top:574px;width:10px;height:23px;background:#66cdaa;"></div>
<div class="r" style="left:147px;top:574px;width:10px;height:23px;background:#d3d3d3;"></div>
<div class="r" style="left:157px;top:574px;width:10px;height:23px;background:#b0c4de;"></div>
<div class="t" style="left:67px;top:576px;color:#8b0000;">d</div>
<div class="t" style="left:77px;top:576px;color:#000;">rwxr-xr-x</div>
<div class="t" style="left:187px;top:576px;color:#00008b;">2</div>
<div class="t" style="left:207px;top:576px;color:#000;">kinney kinney</div>
<div class="t" style="left:357px;top:576px;color:#00008b;">4096</div>
<div class="t" style="left:417px;top:576px;color:#8b6508;">6</div>
<svg class="i" style="left:428px;top:579px" width="14" height="16"><use href="#yue"/></svg>
<div class="t" style="left:453px;top:576px;color:#8b6508;">22</div>
<div class="t" style="left:483px;top:576px;color:#8b6508;">15:32</div>
<div class="r" style="left:544px;top:574px;width:93px;height:23px;background:#d3d3d3;"></div>
<svg class="i" style="left:544px;top:578px" width="18" height="15"><use href="#folder"/></svg>
<div class="t" style="left:577px;top:576px;color:#8b0000;">Public</div>
<div class="r" style="left:67px;top:597px;width:10px;height:23px;background:#d3d3d3;"></div>
<div class="r" style="left:77px;top:597px;width:10px;height:23px;background:#66cdaa;"></div>
<div class="r" style="left:87px;top:597px;width:10px;height:23px;background:#da70d6;"></div>
<div class="r" style="left:97px;top:597px;width:10px;height:23px;background:#b0c4de;"></div>
<div class="r" style="left:107px;top:597px;width:10px;height:23px;background:#d3d3d3;"></div>
<div class="r" style="left:117px;top:597px;width:10px;height:23px;background:#d3d3d3;"></div>
<div class="r" style="left:127px;top:597px;width:10px;height:23px;background:#d3d3d3;"></div>
<div class="r" style="left:137px;top:597px;width:10px;height:23px;background:#d3d3d3;"></div>
<div class="r" style="left:147px;top:597px;width:10px;height:23px;background:#d3d3d3;"></div>
<div class="r" style="left:157px;top:597px;width:10px;height:23px;background:#d3d3d3;"></div>
<div class="t" style="left:67px;top:599px;color:#8b0000;">d</div>
<div class="t" style="left:77px;top:599px;color:#000;">rwx------</div>
<div class="t" style="left:187px;top:599px;color:#00008b;">2</div>
<div class="t" style="left:207px;top:599px;color:#000;">kinney kinney</div>
<div class="t" style="left:357px;top:599px;color:#00008b;">4096</div>
<div class="t" style="left:417px;top:599px;color:#8b6508;">7</div>
<svg class="i" style="left:428px;top:602px" width="14" height="16"><use href="#yue"/></svg>
<div class="t" style="left:463px;top:599px;color:#8b6508;">5</div>
<div class="t" style="left:483px;top:599px;color:#8b6508;">16:35</div>
<div class="r" style="left:544px;top:597px;width:103px;height:23px;background:#d3d3d3;"></div>
<svg class="i" style="left:544px;top:601px" width="18" height="15"><use href="#folder"/></svg>
<div class="t" style="left:577px;top:599px;color:#8b0000;">.recoll</div>
<div class="r" style="left:67px;top:620px;width:10px;height:23px;background:#d3d3d3;"></div>
<div class="r" style="left:77px;top:620px;width:10px;height:23px;background:#66cdaa;"></div>
<div class="r" style="left:87px;top:620px;width:10px;height:23px;background:#da70d6;"></div>
<div class="r" style="left:97px;top:620px;width:10px;height:23px;background:#b0c4de;"></div>
<div class="r" style="left:107px;top:620px;width:10px;height:23px;background:#66cdaa;"></div>
<div class="r" style="left:117px;top:620px;width:10px;height:23px;background:#d3d3d3;"></div>
<div class="r" style="left:127px;top:620px;width:10px;height:23px;background:#b0c4de;"></div>
<div class="r" style="left:137px;top:620px;width:10px;height:23px;background:#66cdaa;"></div>
<div class="r" style="left:147px;top:620px;width:10px;height:23px;background:#d3d3d3;"></div>
<div class="r" style="left:157px;top:620px;width:10px;height:23px;background:#b0c4de;"></div>
<div class="t" style="left:67px;top:622px;color:#8b0000;">d</div>
<div class="t" style="left:77px;top:622px;color:#000;">rwxr-xr-x</div>
<div class="t" style="left:187px;top:622px;color:#00008b;">2</div>
<div class="t" style="left:207px;top:622px;color:#000;">kinney kinney</div>
<div class="t" style="left:357px;top:622px;color:#00008b;">4096</div>
<div class="t" style="left:417px;top:622px;color:#8b6508;">6</div>
<svg class="i" style="left:428px;top:625px" width="14" height="16"><use href="#yue"/></svg>
<div class="t" style="left:453px;top:622px;color:#8b6508;">22</div>
<div class="t" style="left:483px;top:622px;color:#8b6508;">15:33</div>
<div class="r" style="left:544px;top:620px;width:123px;height:23px;background:#d3d3d3;"></div>
<svg class="i" style="left:544px;top:624px" width="18" height="15"><use href="#folder"/></svg>
<div class="t" style="left:577px;top:622px;color:#8b0000;">Templates</div>
<div class="r" style="left:67px;top:643px;width:10px;height:23px;background:#d3d3d3;"></div>
<div class="r" style="left:77px;top:643px;width:10px;height:23px;background:#66cdaa;"></div>
<div class="r" style="left:87px;top:643px;width:10px;height:23px;background:#da70d6;"></div>
<div class="r" style="left:97px;top:643px;width:10px;height:23px;background:#b0c4de;"></div>
<div class="r" style="left:107px;top:643px;width:10px;height:23px;background:#66cdaa;"></div>
<div class="r" style="left:117px;top:643px;width:10px;height:23px;background:#d3d3d3;"></div>
<div class="r" style="left:127px;top:643px;width:10px;height:23px;background:#b0c4de;"></div>
<div class="r" style="left:137px;top:643px;width:10px;height:23px;background:#66cdaa;"></div>
<div class="r" style="left:147px;top:643px;width:10px;height:23px;background:#d3d3d3;"></div>
<div class="r" style="left:157px;top:643px;width:10px;height:23px;background:#b0c4de;"></div>
<div class="t" style="left:67px;top:645px;color:#8b0000;">d</div>
<div class="t" style="left:77px;top:645px;color:#000;">rwxr-xr-x</div>
<div class="t" style="left:187px;top:645px;color:#00008b;">2</div>
<div class="t" style="left:207px;top:645px;color:#000;">kinney kinney</div>
<div class="t" style="left:357px;top:645px;color:#00008b;">4096</div>
<div class="t" style="left:417px;top:645px;color:#8b6508;">7</div>
<svg class="i" style="left:428px;top:648px" width="14" height="16"><use href="#yue"/></svg>
<div class="t" style="left:463px;top:645px;color:#8b6508;">5</div>
<div class="t" style="left:483px;top:645px;color:#8b6508;">18:22</div>
<div class="r" style="left:544px;top:643px;width:73px;height:23px;background:#d3d3d3;"></div>
<svg class="i" style="left:544px;top:647px" width="18" height="15"><use href="#testdir"/></svg>
<div class="t" style="left:577px;top:645px;color:#8b0000;">test</div>
<div class="r" style="left:67px;top:666px;width:10px;height:23px;background:#d3d3d3;"></div>
<div class="r" style="left:77px;top:666px;width:10px;height:23px;background:#66cdaa;"></div>
<div class="r" style="left:87px;top:666px;width:10px;height:23px;background:#da70d6;"></div>
<div class="r" style="left:97px;top:666px;width:10px;height:23px;background:#b0c4de;"></div>
<div class="r" style="left:107px;top:666px;width:10px;height:23px;background:#66cdaa;"></div>
<div class="r" style="left:117px;top:666px;width:10px;height:23px;background:#d3d3d3;"></div>
<div class="r" style="left:127px;top:666px;width:10px;height:23px;background:#b0c4de;"></div>
<div class="r" style="left:137px;top:666px;width:10px;height:23px;background:#66cdaa;"></div>
<div class="r" style="left:147px;top:666px;width:10px;height:23px;background:#d3d3d3;"></div>
<div class="r" style="left:157px;top:666px;width:10px;height:23px;background:#b0c4de;"></div>
<div class="t" style="left:67px;top:668px;color:#8b0000;">d</div>
<div class="t" style="left:77px;top:668px;color:#000;">rwxr-xr-x</div>
<div class="t" style="left:187px;top:668px;color:#00008b;">2</div>
<div class="t" style="left:207px;top:668px;color:#000;">kinney kinney</div>
<div class="t" style="left:357px;top:668px;color:#00008b;">4096</div>
<div class="t" style="left:417px;top:668px;color:#8b6508;">6</div>
<svg class="i" style="left:428px;top:671px" width="14" height="16"><use href="#yue"/></svg>
<div class="t" style="left:453px;top:668px;color:#8b6508;">22</div>
<div class="t" style="left:483px;top:668px;color:#8b6508;">15:32</div>
<div class="r" style="left:544px;top:666px;width:93px;height:23px;background:#d3d3d3;"></div>
<svg class="i" style="left:544px;top:670px" width="18" height="15"><use href="#folder"/></svg>
<div class="t" style="left:577px;top:668px;color:#8b0000;">Videos</div>
<div class="r" style="left:77px;top:689px;width:10px;height:23px;background:#66cdaa;"></div>
<div class="r" style="left:87px;top:689px;width:10px;height:23px;background:#da70d6;"></div>
<div class="r" style="left:97px;top:689px;width:10px;height:23px;background:#b0c4de;"></div>
<div class="r" style="left:107px;top:689px;width:10px;height:23px;background:#66cdaa;"></div>
<div class="r" style="left:117px;top:689px;width:10px;height:23px;background:#d3d3d3;"></div>
<div class="r" style="left:127px;top:689px;width:10px;height:23px;background:#b0c4de;"></div>
<div class="r" style="left:137px;top:689px;width:10px;height:23px;background:#66cdaa;"></div>
<div class="r" style="left:147px;top:689px;width:10px;height:23px;background:#d3d3d3;"></div>
<div class="r" style="left:157px;top:689px;width:10px;height:23px;background:#b0c4de;"></div>
<div class="t" style="left:67px;top:691px;color:#000;">-</div>
<div class="t" style="left:77px;top:691px;color:#000;">rwxr-xr-x</div>
<div class="t" style="left:187px;top:691px;color:#00008b;">1</div>
<div class="t" style="left:207px;top:691px;color:#000;">kinney kinney</div>
<div class="t" style="left:367px;top:691px;color:#00008b;">100</div>
<div class="t" style="left:407px;top:691px;color:#8b6508;">10</div>
<svg class="i" style="left:428px;top:694px" width="14" height="16"><use href="#yue"/></svg>
<div class="t" style="left:453px;top:691px;color:#8b6508;">30</div>
<div class="t" style="left:493px;top:691px;color:#8b6508;">2017</div>
<svg class="i" style="left:544px;top:692px" width="17" height="17"><use href="#gear"/></svg>
<div class="t" style="left:577px;top:691px;color:#0000ff;">.Xclients</div>
<div class="r" style="left:77px;top:712px;width:10px;height:23px;background:#66cdaa;"></div>
<div class="r" style="left:87px;top:712px;width:10px;height:23px;background:#da70d6;"></div>
<div class="r" style="left:97px;top:712px;width:10px;height:23px;background:#b0c4de;"></div>
<div class="r" style="left:107px;top:712px;width:10px;height:23px;background:#66cdaa;"></div>
<div class="r" style="left:117px;top:712px;width:10px;height:23px;background:#d3d3d3;"></div>
<div class="r" style="left:127px;top:712px;width:10px;height:23px;background:#b0c4de;"></div>
<div class="r" style="left:137px;top:712px;width:10px;height:23px;background:#66cdaa;"></div>
<div class="r" style="left:147px;top:712px;width:10px;height:23px;background:#d3d3d3;"></div>
<div class="r" style="left:157px;top:712px;width:10px;height:23px;background:#b0c4de;"></div>
<div class="t" style="left:67px;top:714px;color:#000;">-</div>
<div class="t" style="left:77px;top:714px;color:#000;">rwxr-xr-x</div>
<div class="t" style="left:187px;top:714px;color:#00008b;">1</div>
<div class="t" style="left:207px;top:714px;color:#000;">kinney kinney</div>
<div class="t" style="left:357px;top:714px;color:#00008b;">1507</div>
<div class="t" style="left:417px;top:714px;color:#8b6508;">5</div>
<svg class="i" style="left:428px;top:717px" width="14" height="16"><use href="#yue"/></svg>
<div class="t" style="left:453px;top:714px;color:#8b6508;">13</div>
<div class="t" style="left:483px;top:714px;color:#8b6508;">04:34</div>
<svg class="i" style="left:544px;top:715px" width="17" height="17"><use href="#gear"/></svg>
<div class="t" style="left:577px;top:714px;color:#0000ff;">.xinitrc</div>
<div class="r" style="left:77px;top:735px;width:10px;height:23px;background:#66cdaa;"></div>
<div class="r" style="left:87px;top:735px;width:10px;height:23px;background:#da70d6;"></div>
<div class="r" style="left:97px;top:735px;width:10px;height:23px;background:#d3d3d3;"></div>
<div class="r" style="left:107px;top:735px;width:10px;height:23px;background:#66cdaa;"></div>
<div class="r" style="left:117px;top:735px;width:10px;height:23px;background:#d3d3d3;"></div>
<div class="r" style="left:127px;top:735px;width:10px;height:23px;background:#d3d3d3;"></div>
<div class="r" style="left:137px;top:735px;width:10px;height:23px;background:#66cdaa;"></div>
<div class="r" style="left:147px;top:735px;width:10px;height:23px;background:#d3d3d3;"></div>
<div class="r" style="left:157px;top:735px;width:10px;height:23px;background:#d3d3d3;"></div>
<div class="t" style="left:67px;top:737px;color:#000;">-</div>
<div class="t" style="left:77px;top:737px;color:#000;">rw-r--r--</div>
<div class="t" style="left:187px;top:737px;color:#00008b;">1</div>
<div class="t" style="left:207px;top:737px;color:#000;">kinney kinney</div>
<div class="t" style="left:347px;top:737px;color:#00008b;">46847</div>
<div class="t" style="left:417px;top:737px;color:#8b6508;">6</div>
<svg class="i" style="left:428px;top:740px" width="14" height="16"><use href="#yue"/></svg>
<div class="t" style="left:453px;top:737px;color:#8b6508;">23</div>
<div class="t" style="left:483px;top:737px;color:#8b6508;">00:29</div>
<svg class="i" style="left:544px;top:738px" width="17" height="17"><use href="#gear"/></svg>
<div class="t" style="left:577px;top:737px;color:#0000ff;">.zcompdump</div>
<div class="r" style="left:77px;top:758px;width:10px;height:23px;background:#66cdaa;"></div>
<div class="r" style="left:87px;top:758px;width:10px;height:23px;background:#da70d6;"></div>
<div class="r" style="left:97px;top:758px;width:10px;height:23px;background:#d3d3d3;"></div>
<div class="r" style="left:107px;top:758px;width:10px;height:23px;background:#d3d3d3;"></div>
<div class="r" style="left:117px;top:758px;width:10px;height:23px;background:#d3d3d3;"></div>
<div class="r" style="left:127px;top:758px;width:10px;height:23px;background:#d3d3d3;"></div>
<div class="r" style="left:137px;top:758px;width:10px;height:23px;background:#d3d3d3;"></div>
<div class="r" style="left:147px;top:758px;width:10px;height:23px;background:#d3d3d3;"></div>
<div class="r" style="left:157px;top:758px;width:10px;height:23px;background:#d3d3d3;"></div>
<div class="t" style="left:67px;top:760px;color:#000;">-</div>
<div class="t" style="left:77px;top:760px;color:#000;">rw-------</div>
<div class="t" style="left:187px;top:760px;color:#00008b;">1</div>
<div class="t" style="left:207px;top:760px;color:#000;">kinney kinney</div>
<div class="t" style="left:367px;top:760px;color:#00008b;">831</div>
<div class="t" style="left:417px;top:760px;color:#8b6508;">6</div>
<svg class="i" style="left:428px;top:763px" width="14" height="16"><use href="#yue"/></svg>
<div class="t" style="left:453px;top:760px;color:#8b6508;">26</div>
<div class="t" style="left:483px;top:760px;color:#8b6508;">12:57</div>
<svg class="i" style="left:544px;top:761px" width="17" height="17"><use href="#gear"/></svg>
<div class="t" style="left:577px;top:760px;color:#0000ff;">.zhistory</div>
<div class="r" style="left:77px;top:781px;width:10px;height:23px;background:#66cdaa;"></div>
<div class="r" style="left:87px;top:781px;width:10px;height:23px;background:#da70d6;"></div>
<div class="r" style="left:97px;top:781px;width:10px;height:23px;background:#d3d3d3;"></div>
<div class="r" style="left:107px;top:781px;width:10px;height:23px;background:#66cdaa;"></div>
<div class="r" style="left:117px;top:781px;width:10px;height:23px;background:#d3d3d3;"></div>
<div class="r" style="left:127px;top:781px;width:10px;height:23px;background:#d3d3d3;"></div>
<div class="r" style="left:137px;top:781px;width:10px;height:23px;background:#66cdaa;"></div>
<div class="r" style="left:147px;top:781px;width:10px;height:23px;background:#d3d3d3;"></div>
<div class="r" style="left:157px;top:781px;width:10px;height:23px;background:#d3d3d3;"></div>
<div class="t" style="left:67px;top:783px;color:#000;">-</div>
<div class="t" style="left:77px;top:783px;color:#000;">rw-r--r--</div>
<div class="t" style="left:187px;top:783px;color:#00008b;">1</div>
<div class="t" style="left:207px;top:783px;color:#000;">kinney kinney</div>
<div class="t" style="left:357px;top:783px;color:#00008b;">9723</div>
<div class="t" style="left:417px;top:783px;color:#8b6508;">8</div>
<svg class="i" style="left:428px;top:786px" width="14" height="16"><use href="#yue"/></svg>
<div class="t" style="left:453px;top:783px;color:#8b6508;">13</div>
<div class="t" style="left:493px;top:783px;color:#8b6508;">2018</div>
<svg class="i" style="left:545px;top:785px" width="18" height="15"><use href="#term"/></svg>
<div class="t" style="left:577px;top:783px;color:#0000ff;">.zshrc</div>
<div class="r" style="left:833px;top:74px;width:220px;height:21px;background:#ffc0cb;"></div>
<div class="t" style="left:833px;top:74px;color:#0000ff;">/home/kinney/.emacs.d:</div>
<div class="t" style="left:833px;top:95px;color:#000;">[proxychains] DLL init: proxychains-ng 4</div>
<div class="t" style="left:1233px;top:95px;color:#8b008b;">.14</div>
<div class="t" style="left:833px;top:116px;color:#000;">  total used in directory </div>
<div class="t" style="left:1093px;top:116px;color:#00008b;">52</div>
<div class="t" style="left:1113px;top:116px;color:#000;"> available </div>
<div class="t" style="left:1223px;top:116px;color:#00008b;">1.1</div>
<div class="t" style="left:1253px;top:116px;color:#000;"> GiB</div>
<div class="r" style="left:853px;top:137px;width:10px;height:23px;background:#d3d3d3;"></div>
<div class="r" style="left:863px;top:137px;width:10px;height:23px;background:#66cdaa;"></div>
<div class="r" style="left:873px;top:137px;width:10px;height:23px;background:#da70d6;"></div>
<div class="r" style="left:883px;top:137px;width:10px;height:23px;background:#b0c4de;"></div>
<div class="r" style="left:893px;top:137px;width:10px;height:23px;background:#66cdaa;"></div>
<div class="r" style="left:903px;top:137px;width:10px;height:23px;background:#d3d3d3;"></div>
<div class="r" style="left:913px;top:137px;width:10px;height:23px;background:#b0c4de;"></div>
<div class="r" style="left:923px;top:137px;width:10px;height:23px;background:#66cdaa;"></div>
<div class="r" style="left:933px;top:137px;width:10px;height:23px;background:#d3d3d3;"></div>
<div class="r" style="left:943px;top:137px;width:10px;height:23px;background:#b0c4de;"></div>
<div class="t" style="left:853px;top:139px;color:#8b0000;">d</div>
<div class="t" style="left:863px;top:139px;color:#000;">rwxr-xr-x</div>
<div class="t" style="left:973px;top:139px;color:#00008b;">7</div>
<div class="t" style="left:993px;top:139px;color:#000;">kinney kinney</div>
<div class="t" style="left:1133px;top:139px;color:#00008b;">4096</div>
<div class="t" style="left:1193px;top:139px;color:#8b6508;">7</div>
<svg class="i" style="left:1204px;top:142px" width="14" height="16"><use href="#yue"/></svg>
<div class="t" style="left:1239px;top:139px;color:#8b6508;">5</div>
<div class="t" style="left:1259px;top:139px;color:#8b6508;">19:50</div>
<div class="r" style="left:1320px;top:137px;width:43px;height:23px;background:#d3d3d3;"></div>
<div class="t" style="left:1353px;top:139px;color:#8b0000;">.</div>
<div class="r" style="left:853px;top:160px;width:10px;height:23px;background:#d3d3d3;"></div>
<div class="r" style="left:863px;top:160px;width:10px;height:23px;background:#66cdaa;"></div>
<div class="r" style="left:873px;top:160px;width:10px;height:23px;background:#da70d6;"></div>
<div class="r" style="left:883px;top:160px;width:10px;height:23px;background:#b0c4de;"></div>
<div class="r" style="left:893px;top:160px;width:10px;height:23px;background:#d3d3d3;"></div>
<div class="r" style="left:903px;top:160px;width:10px;height:23px;background:#d3d3d3;"></div>
<div class="r" style="left:913px;top:160px;width:10px;height:23px;background:#d3d3d3;"></div>
<div class="r" style="left:923px;top:160px;width:10px;height:23px;background:#d3d3d3;"></div>
<div class="r" style="left:933px;top:160px;width:10px;height:23px;background:#d3d3d3;"></div>
<div class="r" style="left:943px;top:160px;width:10px;height:23px;background:#d3d3d3;"></div>
<div class="t" style="left:853px;top:162px;color:#8b0000;">d</div>
<div class="t" style="left:863px;top:162px;color:#000;">rwx------</div>
<div class="t" style="left:963px;top:162px;color:#00008b;">18</div>
<div class="t" style="left:993px;top:162px;color:#000;">kinney kinney</div>
<div class="t" style="left:1133px;top:162px;color:#00008b;">4096</div>
<div class="t" style="left:1193px;top:162px;color:#8b6508;">7</div>
<svg class="i" style="left:1204px;top:165px" width="14" height="16"><use href="#yue"/></svg>
<div class="t" style="left:1239px;top:162px;color:#8b6508;">5</div>
<div class="t" style="left:1259px;top:162px;color:#8b6508;">19:08</div>
<div class="r" style="left:1320px;top:160px;width:53px;height:23px;background:#d3d3d3;"></div>
<div class="t" style="left:1353px;top:162px;color:#8b0000;">..</div>
<div class="r" style="left:853px;top:183px;width:10px;height:23px;background:#d3d3d3;"></div>
<div class="r" style="left:863px;top:183px;width:10px;height:23px;background:#66cdaa;"></div>
<div class="r" style="left:873px;top:183px;width:10px;height:23px;background:#da70d6;"></div>
<div class="r" style="left:883px;top:183px;width:10px;height:23px;background:#b0c4de;"></div>
<div class="r" style="left:893px;top:183px;width:10px;height:23px;background:#d3d3d3;"></div>
<div class="r" style="left:903px;top:183px;width:10px;height:23px;background:#d3d3d3;"></div>
<div class="r" style="left:913px;top:183px;width:10px;height:23px;background:#d3d3d3;"></div>
<div class="r" style="left:923px;top:183px;width:10px;height:23px;background:#d3d3d3;"></div>
<div class="r" style="left:933px;top:183px;width:10px;height:23px;background:#d3d3d3;"></div>
<div class="r" style="left:943px;top:183px;width:10px;height:23px;background:#d3d3d3;"></div>
<div class="t" style="left:853px;top:185px;color:#8b0000;">d</div>
<div class="t" style="left:863px;top:185px;color:#000;">rwx------</div>
<div class="t" style="left:973px;top:185px;color:#00008b;">2</div>
<div class="t" style="left:993px;top:185px;color:#000;">kinney kinney</div>
<div class="t" style="left:1133px;top:185px;color:#00008b;">4096</div>
<div class="t" style="left:1193px;top:185px;color:#8b6508;">7</div>
<svg class="i" style="left:1204px;top:188px" width="14" height="16"><use href="#yue"/></svg>
<div class="t" style="left:1239px;top:185px;color:#8b6508;">5</div>
<div class="t" style="left:1259px;top:185px;color:#8b6508;">19:54</div>
<div class="r" style="left:1320px;top:183px;width:173px;height:23px;background:#d3d3d3;"></div>
<svg class="i" style="left:1320px;top:187px" width="18" height="15"><use href="#folder"/></svg>
<div class="t" style="left:1353px;top:185px;color:#8b0000;">auto-save-list</div>
<div class="r" style="left:863px;top:206px;width:10px;height:23px;background:#66cdaa;"></div>
<div class="r" style="left:873px;top:206px;width:10px;height:23px;background:#da70d6;"></div>
<div class="r" style="left:883px;top:206px;width:10px;height:23px;background:#d3d3d3;"></div>
<div class="r" style="left:893px;top:206px;width:10px;height:23px;background:#66cdaa;"></div>
<div class="r" style="left:903px;top:206px;width:10px;height:23px;background:#d3d3d3;"></div>
<div class="r" style="left:913px;top:206px;width:10px;height:23px;background:#d3d3d3;"></div>
<div class="r" style="left:923px;top:206px;width:10px;height:23px;background:#66cdaa;"></div>
<div class="r" style="left:933px;top:206px;width:10px;height:23px;background:#d3d3d3;"></div>
<div class="r" style="left:943px;top:206px;width:10px;height:23px;background:#d3d3d3;"></div>
<div class="t" style="left:853px;top:208px;color:#000;">-</div>
<div class="t" style="left:863px;top:208px;color:#000;">rw-r--r--</div>
<div class="t" style="left:973px;top:208px;color:#00008b;">1</div>
<div class="t" style="left:993px;top:208px;color:#000;">kinney kinney</div>
<div class="t" style="left:1143px;top:208px;color:#00008b;">388</div>
<div class="t" style="left:1193px;top:208px;color:#8b6508;">7</div>
<svg class="i" style="left:1204px;top:211px" width="14" height="16"><use href="#yue"/></svg>
<div class="t" style="left:1239px;top:208px;color:#8b6508;">4</div>
<div class="t" style="left:1259px;top:208px;color:#8b6508;">20:50</div>
<svg class="i" style="left:1320px;top:206px" width="14" height="22"><use href="#bookmark"/></svg>
<div class="t" style="left:1353px;top:208px;color:#0000ff;">bookmarks</div>
<div class="r" style="left:863px;top:229px;width:10px;height:24px;background:#66cdaa;"></div>
<div class="r" style="left:873px;top:229px;width:10px;height:24px;background:#da70d6;"></div>
<div class="r" style="left:883px;top:229px;width:10px;height:24px;background:#d3d3d3;"></div>
<div class="r" style="left:893px;top:229px;width:10px;height:24px;background:#66cdaa;"></div>
<div class="r" style="left:903px;top:229px;width:10px;height:24px;background:#d3d3d3;"></div>
<div class="r" style="left:913px;top:229px;width:10px;height:24px;background:#d3d3d3;"></div>
<div class="r" style="left:923px;top:229px;width:10px;height:24px;background:#66cdaa;"></div>
<div class="r" style="left:933px;top:229px;width:10px;height:24px;background:#d3d3d3;"></div>
<div class="r" style="left:943px;top:229px;width:10px;height:24px;background:#d3d3d3;"></div>
<div class="t" style="left:853px;top:232px;color:#000;">-</div>
<div class="t" style="left:863px;top:232px;color:#000;">rw-r--r--</div>
<div class="t" style="left:973px;top:232px;color:#00008b;">1</div>
<div class="t" style="left:993px;top:232px;color:#000;">kinney kinney</div>
<div class="t" style="left:1143px;top:232px;color:#00008b;">612</div>
<div class="t" style="left:1193px;top:232px;color:#8b6508;">7</div>
<svg class="i" style="left:1204px;top:235px" width="14" height="16"><use href="#yue"/></svg>
<div class="t" style="left:1239px;top:232px;color:#8b6508;">5</div>
<div class="t" style="left:1259px;top:232px;color:#8b6508;">19:40</div>
<svg class="i" style="left:1320px;top:229px" width="20" height="20"><use href="#emacs"/></svg>
<div class="t" style="left:1353px;top:232px;color:#0000ff;">custom</div>
<div class="t" style="left:1413px;top:232px;color:#8b008b;">.el</div>
<div class="r" style="left:853px;top:253px;width:10px;height:23px;background:#d3d3d3;"></div>
<div class="r" style="left:863px;top:253px;width:10px;height:23px;background:#66cdaa;"></div>
<div class="r" style="left:873px;top:253px;width:10px;height:23px;background:#da70d6;"></div>
<div class="r" style="left:883px;top:253px;width:10px;height:23px;background:#b0c4de;"></div>
<div class="r" style="left:893px;top:253px;width:10px;height:23px;background:#66cdaa;"></div>
<div class="r" style="left:903px;top:253px;width:10px;height:23px;background:#d3d3d3;"></div>
<div class="r" style="left:913px;top:253px;width:10px;height:23px;background:#b0c4de;"></div>
<div class="r" style="left:923px;top:253px;width:10px;height:23px;background:#66cdaa;"></div>
<div class="r" style="left:933px;top:253px;width:10px;height:23px;background:#d3d3d3;"></div>
<div class="r" style="left:943px;top:253px;width:10px;height:23px;background:#b0c4de;"></div>
<div class="t" style="left:853px;top:255px;color:#8b0000;">d</div>
<div class="t" style="left:863px;top:255px;color:#000;">rwxr-xr-x</div>
<div class="t" style="left:973px;top:255px;color:#00008b;">2</div>
<div class="t" style="left:993px;top:255px;color:#000;">kinney kinney</div>
<div class="t" style="left:1133px;top:255px;color:#00008b;">4096</div>
<div class="t" style="left:1193px;top:255px;color:#8b6508;">7</div>
<svg class="i" style="left:1204px;top:258px" width="14" height="16"><use href="#yue"/></svg>
<div class="t" style="left:1239px;top:255px;color:#8b6508;">5</div>
<div class="t" style="left:1259px;top:255px;color:#8b6508;">19:40</div>
<div class="r" style="left:1320px;top:253px;width:83px;height:23px;background:#d3d3d3;"></div>
<svg class="i" style="left:1320px;top:257px" width="18" height="15"><use href="#folder"/></svg>
<div class="t" style="left:1353px;top:255px;color:#8b0000;">elisp</div>
<div class="r" style="left:853px;top:276px;width:10px;height:23px;background:#d3d3d3;"></div>
<div class="r" style="left:863px;top:276px;width:10px;height:23px;background:#66cdaa;"></div>
<div class="r" style="left:873px;top:276px;width:10px;height:23px;background:#da70d6;"></div>
<div class="r" style="left:883px;top:276px;width:10px;height:23px;background:#b0c4de;"></div>
<div class="r" style="left:893px;top:276px;width:10px;height:23px;background:#66cdaa;"></div>
<div class="r" style="left:903px;top:276px;width:10px;height:23px;background:#d3d3d3;"></div>
<div class="r" style="left:913px;top:276px;width:10px;height:23px;background:#b0c4de;"></div>
<div class="r" style="left:923px;top:276px;width:10px;height:23px;background:#66cdaa;"></div>
<div class="r" style="left:933px;top:276px;width:10px;height:23px;background:#d3d3d3;"></div>
<div class="r" style="left:943px;top:276px;width:10px;height:23px;background:#b0c4de;"></div>
<div class="t" style="left:853px;top:278px;color:#8b0000;">d</div>
<div class="t" style="left:863px;top:278px;color:#000;">rwxr-xr-x</div>
<div class="t" style="left:963px;top:278px;color:#00008b;">18</div>
<div class="t" style="left:993px;top:278px;color:#000;">kinney kinney</div>
<div class="t" style="left:1133px;top:278px;color:#00008b;">4096</div>
<div class="t" style="left:1193px;top:278px;color:#8b6508;">7</div>
<svg class="i" style="left:1204px;top:281px" width="14" height="16"><use href="#yue"/></svg>
<div class="t" style="left:1239px;top:278px;color:#8b6508;">5</div>
<div class="t" style="left:1259px;top:278px;color:#8b6508;">19:40</div>
<div class="r" style="left:1320px;top:276px;width:73px;height:23px;background:#d3d3d3;"></div>
<svg class="i" style="left:1320px;top:280px" width="18" height="15"><use href="#folder"/></svg>
<div class="t" style="left:1353px;top:278px;color:#8b0000;">elpa</div>
<div class="r" style="left:863px;top:299px;width:10px;height:24px;background:#66cdaa;"></div>
<div class="r" style="left:873px;top:299px;width:10px;height:24px;background:#da70d6;"></div>
<div class="r" style="left:883px;top:299px;width:10px;height:24px;background:#d3d3d3;"></div>
<div class="r" style="left:893px;top:299px;width:10px;height:24px;background:#66cdaa;"></div>
<div class="r" style="left:903px;top:299px;width:10px;height:24px;background:#d3d3d3;"></div>
<div class="r" style="left:913px;top:299px;width:10px;height:24px;background:#d3d3d3;"></div>
<div class="r" style="left:923px;top:299px;width:10px;height:24px;background:#66cdaa;"></div>
<div class="r" style="left:933px;top:299px;width:10px;height:24px;background:#d3d3d3;"></div>
<div class="r" style="left:943px;top:299px;width:10px;height:24px;background:#d3d3d3;"></div>
<div class="t" style="left:853px;top:302px;color:#000;">-</div>
<div class="t" style="left:863px;top:302px;color:#000;">rw-r--r--</div>
<div class="t" style="left:973px;top:302px;color:#00008b;">1</div>
<div class="t" style="left:993px;top:302px;color:#000;">kinney kinney</div>
<div class="t" style="left:1143px;top:302px;color:#00008b;">447</div>
<div class="t" style="left:1193px;top:302px;color:#8b6508;">7</div>
<svg class="i" style="left:1204px;top:305px" width="14" height="16"><use href="#yue"/></svg>
<div class="t" style="left:1239px;top:302px;color:#8b6508;">2</div>
<div class="t" style="left:1259px;top:302px;color:#8b6508;">22:13</div>
<svg class="i" style="left:1320px;top:299px" width="20" height="20"><use href="#emacs"/></svg>
<div class="t" style="left:1353px;top:302px;color:#0000ff;">init</div>
<div class="t" style="left:1393px;top:302px;color:#8b008b;">.el</div>
<div class="r" style="left:863px;top:323px;width:10px;height:23px;background:#66cdaa;"></div>
<div class="r" style="left:873px;top:323px;width:10px;height:23px;background:#da70d6;"></div>
<div class="r" style="left:883px;top:323px;width:10px;height:23px;background:#d3d3d3;"></div>
<div class="r" style="left:893px;top:323px;width:10px;height:23px;background:#66cdaa;"></div>
<div class="r" style="left:903px;top:323px;width:10px;height:23px;background:#d3d3d3;"></div>
<div class="r" style="left:913px;top:323px;width:10px;height:23px;background:#d3d3d3;"></div>
<div class="r" style="left:923px;top:323px;width:10px;height:23px;background:#66cdaa;"></div>
<div class="r" style="left:933px;top:323px;width:10px;height:23px;background:#d3d3d3;"></div>
<div class="r" style="left:943px;top:323px;width:10px;height:23px;background:#d3d3d3;"></div>
<div class="t" style="left:853px;top:325px;color:#000;">-</div>
<div class="t" style="left:863px;top:325px;color:#000;">rw-r--r--</div>
<div class="t" style="left:973px;top:325px;color:#00008b;">1</div>
<div class="t" style="left:993px;top:325px;color:#000;">kinney kinney</div>
<div class="t" style="left:1133px;top:325px;color:#00008b;">4958</div>
<div class="t" style="left:1193px;top:325px;color:#8b6508;">7</div>
<svg class="i" style="left:1204px;top:328px" width="14" height="16"><use href="#yue"/></svg>
<div class="t" style="left:1239px;top:325px;color:#8b6508;">5</div>
<div class="t" style="left:1259px;top:325px;color:#8b6508;">19:50</div>
<svg class="i" style="left:1320px;top:324px" width="17" height="20"><use href="#file"/></svg>
<div class="t" style="left:1353px;top:325px;color:#0000ff;">places</div>
<div class="r" style="left:863px;top:346px;width:10px;height:23px;background:#66cdaa;"></div>
<div class="r" style="left:873px;top:346px;width:10px;height:23px;background:#da70d6;"></div>
<div class="r" style="left:883px;top:346px;width:10px;height:23px;background:#d3d3d3;"></div>
<div class="r" style="left:893px;top:346px;width:10px;height:23px;background:#d3d3d3;"></div>
<div class="r" style="left:903px;top:346px;width:10px;height:23px;background:#d3d3d3;"></div>
<div class="r" style="left:913px;top:346px;width:10px;height:23px;background:#d3d3d3;"></div>
<div class="r" style="left:923px;top:346px;width:10px;height:23px;background:#d3d3d3;"></div>
<div class="r" style="left:933px;top:346px;width:10px;height:23px;background:#d3d3d3;"></div>
<div class="r" style="left:943px;top:346px;width:10px;height:23px;background:#d3d3d3;"></div>
<div class="t" style="left:853px;top:348px;color:#000;">-</div>
<div class="t" style="left:863px;top:348px;color:#000;">rw-------</div>
<div class="t" style="left:973px;top:348px;color:#00008b;">1</div>
<div class="t" style="left:993px;top:348px;color:#000;">kinney kinney</div>
<div class="t" style="left:1133px;top:348px;color:#00008b;">1225</div>
<div class="t" style="left:1193px;top:348px;color:#8b6508;">7</div>
<svg class="i" style="left:1204px;top:351px" width="14" height="16"><use href="#yue"/></svg>
<div class="t" style="left:1239px;top:348px;color:#8b6508;">5</div>
<div class="t" style="left:1259px;top:348px;color:#8b6508;">19:50</div>
<svg class="i" style="left:1320px;top:347px" width="17" height="20"><use href="#file"/></svg>
<div class="t" style="left:1353px;top:348px;color:#0000ff;">recentf</div>
<div class="r" style="left:853px;top:369px;width:10px;height:23px;background:#d3d3d3;"></div>
<div class="r" style="left:863px;top:369px;width:10px;height:23px;background:#66cdaa;"></div>
<div class="r" style="left:873px;top:369px;width:10px;height:23px;background:#da70d6;"></div>
<div class="r" style="left:883px;top:369px;width:10px;height:23px;background:#b0c4de;"></div>
<div class="r" style="left:893px;top:369px;width:10px;height:23px;background:#66cdaa;"></div>
<div class="r" style="left:903px;top:369px;width:10px;height:23px;background:#d3d3d3;"></div>
<div class="r" style="left:913px;top:369px;width:10px;height:23px;background:#b0c4de;"></div>
<div class="r" style="left:923px;top:369px;width:10px;height:23px;background:#66cdaa;"></div>
<div class="r" style="left:933px;top:369px;width:10px;height:23px;background:#d3d3d3;"></div>
<div class="r" style="left:943px;top:369px;width:10px;height:23px;background:#b0c4de;"></div>
<div class="t" style="left:853px;top:371px;color:#8b0000;">d</div>
<div class="t" style="left:863px;top:371px;color:#000;">rwxr-xr-x</div>
<div class="t" style="left:973px;top:371px;color:#00008b;">2</div>
<div class="t" style="left:993px;top:371px;color:#000;">kinney kinney</div>
<div class="t" style="left:1133px;top:371px;color:#00008b;">4096</div>
<div class="t" style="left:1193px;top:371px;color:#8b6508;">6</div>
<svg class="i" style="left:1204px;top:374px" width="14" height="16"><use href="#yue"/></svg>
<div class="t" style="left:1229px;top:371px;color:#8b6508;">25</div>
<div class="t" style="left:1259px;top:371px;color:#8b6508;">21:42</div>
<div class="r" style="left:1320px;top:369px;width:123px;height:23px;background:#d3d3d3;"></div>
<svg class="i" style="left:1320px;top:373px" width="18" height="15"><use href="#folder"/></svg>
<div class="t" style="left:1353px;top:371px;color:#8b0000;">submodule</div>
<div class="r" style="left:853px;top:392px;width:10px;height:23px;background:#d3d3d3;"></div>
<div class="r" style="left:863px;top:392px;width:10px;height:23px;background:#66cdaa;"></div>
<div class="r" style="left:873px;top:392px;width:10px;height:23px;background:#da70d6;"></div>
<div class="r" style="left:883px;top:392px;width:10px;height:23px;background:#b0c4de;"></div>
<div class="r" style="left:893px;top:392px;width:10px;height:23px;background:#66cdaa;"></div>
<div class="r" style="left:903px;top:392px;width:10px;height:23px;background:#d3d3d3;"></div>
<div class="r" style="left:913px;top:392px;width:10px;height:23px;background:#b0c4de;"></div>
<div class="r" style="left:923px;top:392px;width:10px;height:23px;background:#66cdaa;"></div>
<div class="r" style="left:933px;top:392px;width:10px;height:23px;background:#d3d3d3;"></div>
<div class="r" style="left:943px;top:392px;width:10px;height:23px;background:#b0c4de;"></div>
<div class="t" style="left:853px;top:394px;color:#8b0000;">d</div>
<div class="t" style="left:863px;top:394px;color:#000;">rwxr-xr-x</div>
<div class="t" style="left:973px;top:394px;color:#00008b;">2</div>
<div class="t" style="left:993px;top:394px;color:#000;">kinney kinney</div>
<div class="t" style="left:1133px;top:394px;color:#00008b;">4096</div>
<div class="t" style="left:1193px;top:394px;color:#8b6508;">6</div>
<svg class="i" style="left:1204px;top:397px" width="14" height="16"><use href="#yue"/></svg>
<div class="t" style="left:1229px;top:394px;color:#8b6508;">25</div>
<div class="t" style="left:1259px;top:394px;color:#8b6508;">11:22</div>
<div class="r" style="left:1320px;top:392px;width:63px;height:23px;background:#d3d3d3;"></div>
<svg class="i" style="left:1320px;top:396px" width="18" height="15"><use href="#folder"/></svg>
<div class="t" style="left:1353px;top:394px;color:#8b0000;">url</div>
<div class="r" style="left:833px;top:436px;width:280px;height:21px;background:#ffc0cb;"></div>
<div class="t" style="left:833px;top:436px;color:#0000ff;">/home/kinney/.emacs.d/elisp:</div>
<div class="t" style="left:833px;top:457px;color:#000;">[proxychains] DLL init: proxychains-ng 4</div>
<div class="t" style="left:1233px;top:457px;color:#8b008b;">.14</div>
<div class="t" style="left:833px;top:478px;color:#000;">  total used in directory </div>
<div class="t" style="left:1093px;top:478px;color:#00008b;">24</div>
<div class="t" style="left:1113px;top:478px;color:#000;"> available </div>
<div class="t" style="left:1223px;top:478px;color:#00008b;">1.1</div>
<div class="t" style="left:1253px;top:478px;color:#000;"> GiB</div>
<div class="r" style="left:853px;top:499px;width:10px;height:23px;background:#d3d3d3;"></div>
<div class="r" style="left:863px;top:499px;width:10px;height:23px;background:#66cdaa;"></div>
<div class="r" style="left:873px;top:499px;width:10px;height:23px;background:#da70d6;"></div>
<div class="r" style="left:883px;top:499px;width:10px;height:23px;background:#b0c4de;"></div>
<div class="r" style="left:893px;top:499px;width:10px;height:23px;background:#66cdaa;"></div>
<div class="r" style="left:903px;top:499px;width:10px;height:23px;background:#d3d3d3;"></div>
<div class="r" style="left:913px;top:499px;width:10px;height:23px;background:#b0c4de;"></div>
<div class="r" style="left:923px;top:499px;width:10px;height:23px;background:#66cdaa;"></div>
<div class="r" style="left:933px;top:499px;width:10px;height:23px;background:#d3d3d3;"></div>
<div class="r" style="left:943px;top:499px;width:10px;height:23px;background:#b0c4de;"></div>
<div class="t" style="left:853px;top:501px;color:#8b0000;">d</div>
<div class="t" style="left:863px;top:501px;color:#000;">rwxr-xr-x</div>
<div class="t" style="left:963px;top:501px;color:#00008b;">2</div>
<div class="t" style="left:983px;top:501px;color:#000;">kinney kinney</div>
<div class="t" style="left:1123px;top:501px;color:#00008b;">4096</div>
<div class="t" style="left:1183px;top:501px;color:#8b6508;">7</div>
<svg class="i" style="left:1194px;top:504px" width="14" height="16"><use href="#yue"/></svg>
<div class="t" style="left:1229px;top:501px;color:#8b6508;">5</div>
<div class="t" style="left:1249px;top:501px;color:#8b6508;">19:40</div>
<div class="r" style="left:1310px;top:499px;width:43px;height:23px;background:#d3d3d3;"></div>
<svg class="i" style="left:1310px;top:503px" width="18" height="15"><use href="#folder"/></svg>
<div class="t" style="left:1343px;top:501px;color:#8b0000;">.</div>
<div class="r" style="left:853px;top:522px;width:10px;height:23px;background:#d3d3d3;"></div>
<div class="r" style="left:863px;top:522px;width:10px;height:23px;background:#66cdaa;"></div>
<div class="r" style="left:873px;top:522px;width:10px;height:23px;background:#da70d6;"></div>
<div class="r" style="left:883px;top:522px;width:10px;height:23px;background:#b0c4de;"></div>
<div class="r" style="left:893px;top:522px;width:10px;height:23px;background:#66cdaa;"></div>
<div class="r" style="left:903px;top:522px;width:10px;height:23px;background:#d3d3d3;"></div>
<div class="r" style="left:913px;top:522px;width:10px;height:23px;background:#b0c4de;"></div>
<div class="r" style="left:923px;top:522px;width:10px;height:23px;background:#66cdaa;"></div>
<div class="r" style="left:933px;top:522px;width:10px;height:23px;background:#d3d3d3;"></div>
<div class="r" style="left:943px;top:522px;width:10px;height:23px;background:#b0c4de;"></div>
<div class="t" style="left:853px;top:524px;color:#8b0000;">d</div>
<div class="t" style="left:863px;top:524px;color:#000;">rwxr-xr-x</div>
<div class="t" style="left:963px;top:524px;color:#00008b;">7</div>
<div class="t" style="left:983px;top:524px;color:#000;">kinney kinney</div>
<div class="t" style="left:1123px;top:524px;color:#00008b;">4096</div>
<div class="t" style="left:1183px;top:524px;color:#8b6508;">7</div>
<svg class="i" style="left:1194px;top:527px" width="14" height="16"><use href="#yue"/></svg>
<div class="t" style="left:1229px;top:524px;color:#8b6508;">5</div>
<div class="t" style="left:1249px;top:524px;color:#8b6508;">19:50</div>
<div class="r" style="left:1310px;top:522px;width:53px;height:23px;background:#d3d3d3;"></div>
<svg class="i" style="left:1310px;top:526px" width="18" height="15"><use href="#folder"/></svg>
<div class="t" style="left:1343px;top:524px;color:#8b0000;">..</div>
<div class="r" style="left:863px;top:545px;width:10px;height:24px;background:#66cdaa;"></div>
<div class="r" style="left:873px;top:545px;width:10px;height:24px;background:#da70d6;"></div>
<div class="r" style="left:883px;top:545px;width:10px;height:24px;background:#d3d3d3;"></div>
<div class="r" style="left:893px;top:545px;width:10px;height:24px;background:#66cdaa;"></div>
<div class="r" style="left:903px;top:545px;width:10px;height:24px;background:#d3d3d3;"></div>
<div class="r" style="left:913px;top:545px;width:10px;height:24px;background:#d3d3d3;"></div>
<div class="r" style="left:923px;top:545px;width:10px;height:24px;background:#66cdaa;"></div>
<div class="r" style="left:933px;top:545px;width:10px;height:24px;background:#d3d3d3;"></div>
<div class="r" style="left:943px;top:545px;width:10px;height:24px;background:#d3d3d3;"></div>
<div class="t" style="left:853px;top:548px;color:#000;">-</div>
<div class="t" style="left:863px;top:548px;color:#000;">rw-r--r--</div>
<div class="t" style="left:963px;top:548px;color:#00008b;">1</div>
<div class="t" style="left:983px;top:548px;color:#000;">kinney kinney</div>
<div class="t" style="left:1123px;top:548px;color:#00008b;">1649</div>
<div class="t" style="left:1183px;top:548px;color:#8b6508;">7</div>
<svg class="i" style="left:1194px;top:551px" width="14" height="16"><use href="#yue"/></svg>
<div class="t" style="left:1229px;top:548px;color:#8b6508;">4</div>
<div class="t" style="left:1249px;top:548px;color:#8b6508;">10:10</div>
<svg class="i" style="left:1310px;top:545px" width="20" height="20"><use href="#emacs"/></svg>
<div class="t" style="left:1343px;top:548px;color:#0000ff;">init-better</div>
<div class="t" style="left:1453px;top:548px;color:#8b008b;">.el</div>
<div class="r" style="left:863px;top:569px;width:10px;height:24px;background:#66cdaa;"></div>
<div class="r" style="left:873px;top:569px;width:10px;height:24px;background:#da70d6;"></div>
<div class="r" style="left:883px;top:569px;width:10px;height:24px;background:#d3d3d3;"></div>
<div class="r" style="left:893px;top:569px;width:10px;height:24px;background:#66cdaa;"></div>
<div class="r" style="left:903px;top:569px;width:10px;height:24px;background:#d3d3d3;"></div>
<div class="r" style="left:913px;top:569px;width:10px;height:24px;background:#d3d3d3;"></div>
<div class="r" style="left:923px;top:569px;width:10px;height:24px;background:#66cdaa;"></div>
<div class="r" style="left:933px;top:569px;width:10px;height:24px;background:#d3d3d3;"></div>
<div class="r" style="left:943px;top:569px;width:10px;height:24px;background:#d3d3d3;"></div>
<div class="t" style="left:853px;top:572px;color:#000;">-</div>
<div class="t" style="left:863px;top:572px;color:#000;">rw-r--r--</div>
<div class="t" style="left:963px;top:572px;color:#00008b;">1</div>
<div class="t" style="left:983px;top:572px;color:#000;">kinney kinney</div>
<div class="t" style="left:1123px;top:572px;color:#00008b;">4606</div>
<div class="t" style="left:1183px;top:572px;color:#8b6508;">7</div>
<svg class="i" style="left:1194px;top:575px" width="14" height="16"><use href="#yue"/></svg>
<div class="t" style="left:1229px;top:572px;color:#8b6508;">5</div>
<div class="t" style="left:1249px;top:572px;color:#8b6508;">18:48</div>
<svg class="i" style="left:1310px;top:569px" width="20" height="20"><use href="#emacs"/></svg>
<div class="r" style="left:1343px;top:572px;width:10px;height:21px;background:#000;"></div>
<div class="t" style="left:1343px;top:572px;color:#fff;">i</div>
<div class="t" style="left:1353px;top:572px;color:#0000ff;">nit-filemanage</div>
<div class="t" style="left:1493px;top:572px;color:#8b008b;">.el</div>
<div class="r" style="left:863px;top:593px;width:10px;height:24px;background:#66cdaa;"></div>
<div class="r" style="left:873px;top:593px;width:10px;height:24px;background:#da70d6;"></div>
<div class="r" style="left:883px;top:593px;width:10px;height:24px;background:#d3d3d3;"></div>
<div class="r" style="left:893px;top:593px;width:10px;height:24px;background:#66cdaa;"></div>
<div class="r" style="left:903px;top:593px;width:10px;height:24px;background:#d3d3d3;"></div>
<div class="r" style="left:913px;top:593px;width:10px;height:24px;background:#d3d3d3;"></div>
<div class="r" style="left:923px;top:593px;width:10px;height:24px;background:#66cdaa;"></div>
<div class="r" style="left:933px;top:593px;width:10px;height:24px;background:#d3d3d3;"></div>
<div class="r" style="left:943px;top:593px;width:10px;height:24px;background:#d3d3d3;"></div>
<div class="t" style="left:853px;top:596px;color:#000;">-</div>
<div class="t" style="left:863px;top:596px;color:#000;">rw-r--r--</div>
<div class="t" style="left:963px;top:596px;color:#00008b;">1</div>
<div class="t" style="left:983px;top:596px;color:#000;">kinney kinney</div>
<div class="t" style="left:1133px;top:596px;color:#00008b;">494</div>
<div class="t" style="left:1183px;top:596px;color:#8b6508;">7</div>
<svg class="i" style="left:1194px;top:599px" width="14" height="16"><use href="#yue"/></svg>
<div class="t" style="left:1229px;top:596px;color:#8b6508;">5</div>
<div class="t" style="left:1249px;top:596px;color:#8b6508;">19:40</div>
<svg class="i" style="left:1310px;top:593px" width="20" height="20"><use href="#emacs"/></svg>
<div class="t" style="left:1343px;top:596px;color:#0000ff;">init-utils</div>
<div class="t" style="left:1443px;top:596px;color:#8b008b;">.el</div>
<div class="r" style="left:19px;top:863px;width:784px;height:19px;background:#e5e5e5;border:1px solid #bfbfbf"></div>
<div class="r" style="left:806px;top:863px;width:788px;height:20px;background:#bfbfbf;border-right:1px solid #7f7f7f;border-bottom:1px solid #7f7f7f;box-sizing:content-box;width:788px;height:20px"></div>
<div class="t" style="left:19px;top:863px;color:#333;"> U:%%-  </div>
<div class="t" style="left:99px;top:863px;color:#333;font-weight:bold;">kinney</div>
<div class="t" style="left:299px;top:863px;color:#333;">All L16    (Dired by name all-the-icons-dired-mode</div>
<div class="t" style="left:806px;top:863px;color:#000;"> U:%%-  </div>
<div class="t" style="left:886px;top:863px;color:#000;font-weight:bold;">.emacs.d</div>
<div class="t" style="left:1086px;top:863px;color:#000;">All L23    (Dired by name all-the-icons-dired-mode</div>
<div class="t" style="left:27px;top:884px;color:#000;">Mark set</div>
</body></html>
